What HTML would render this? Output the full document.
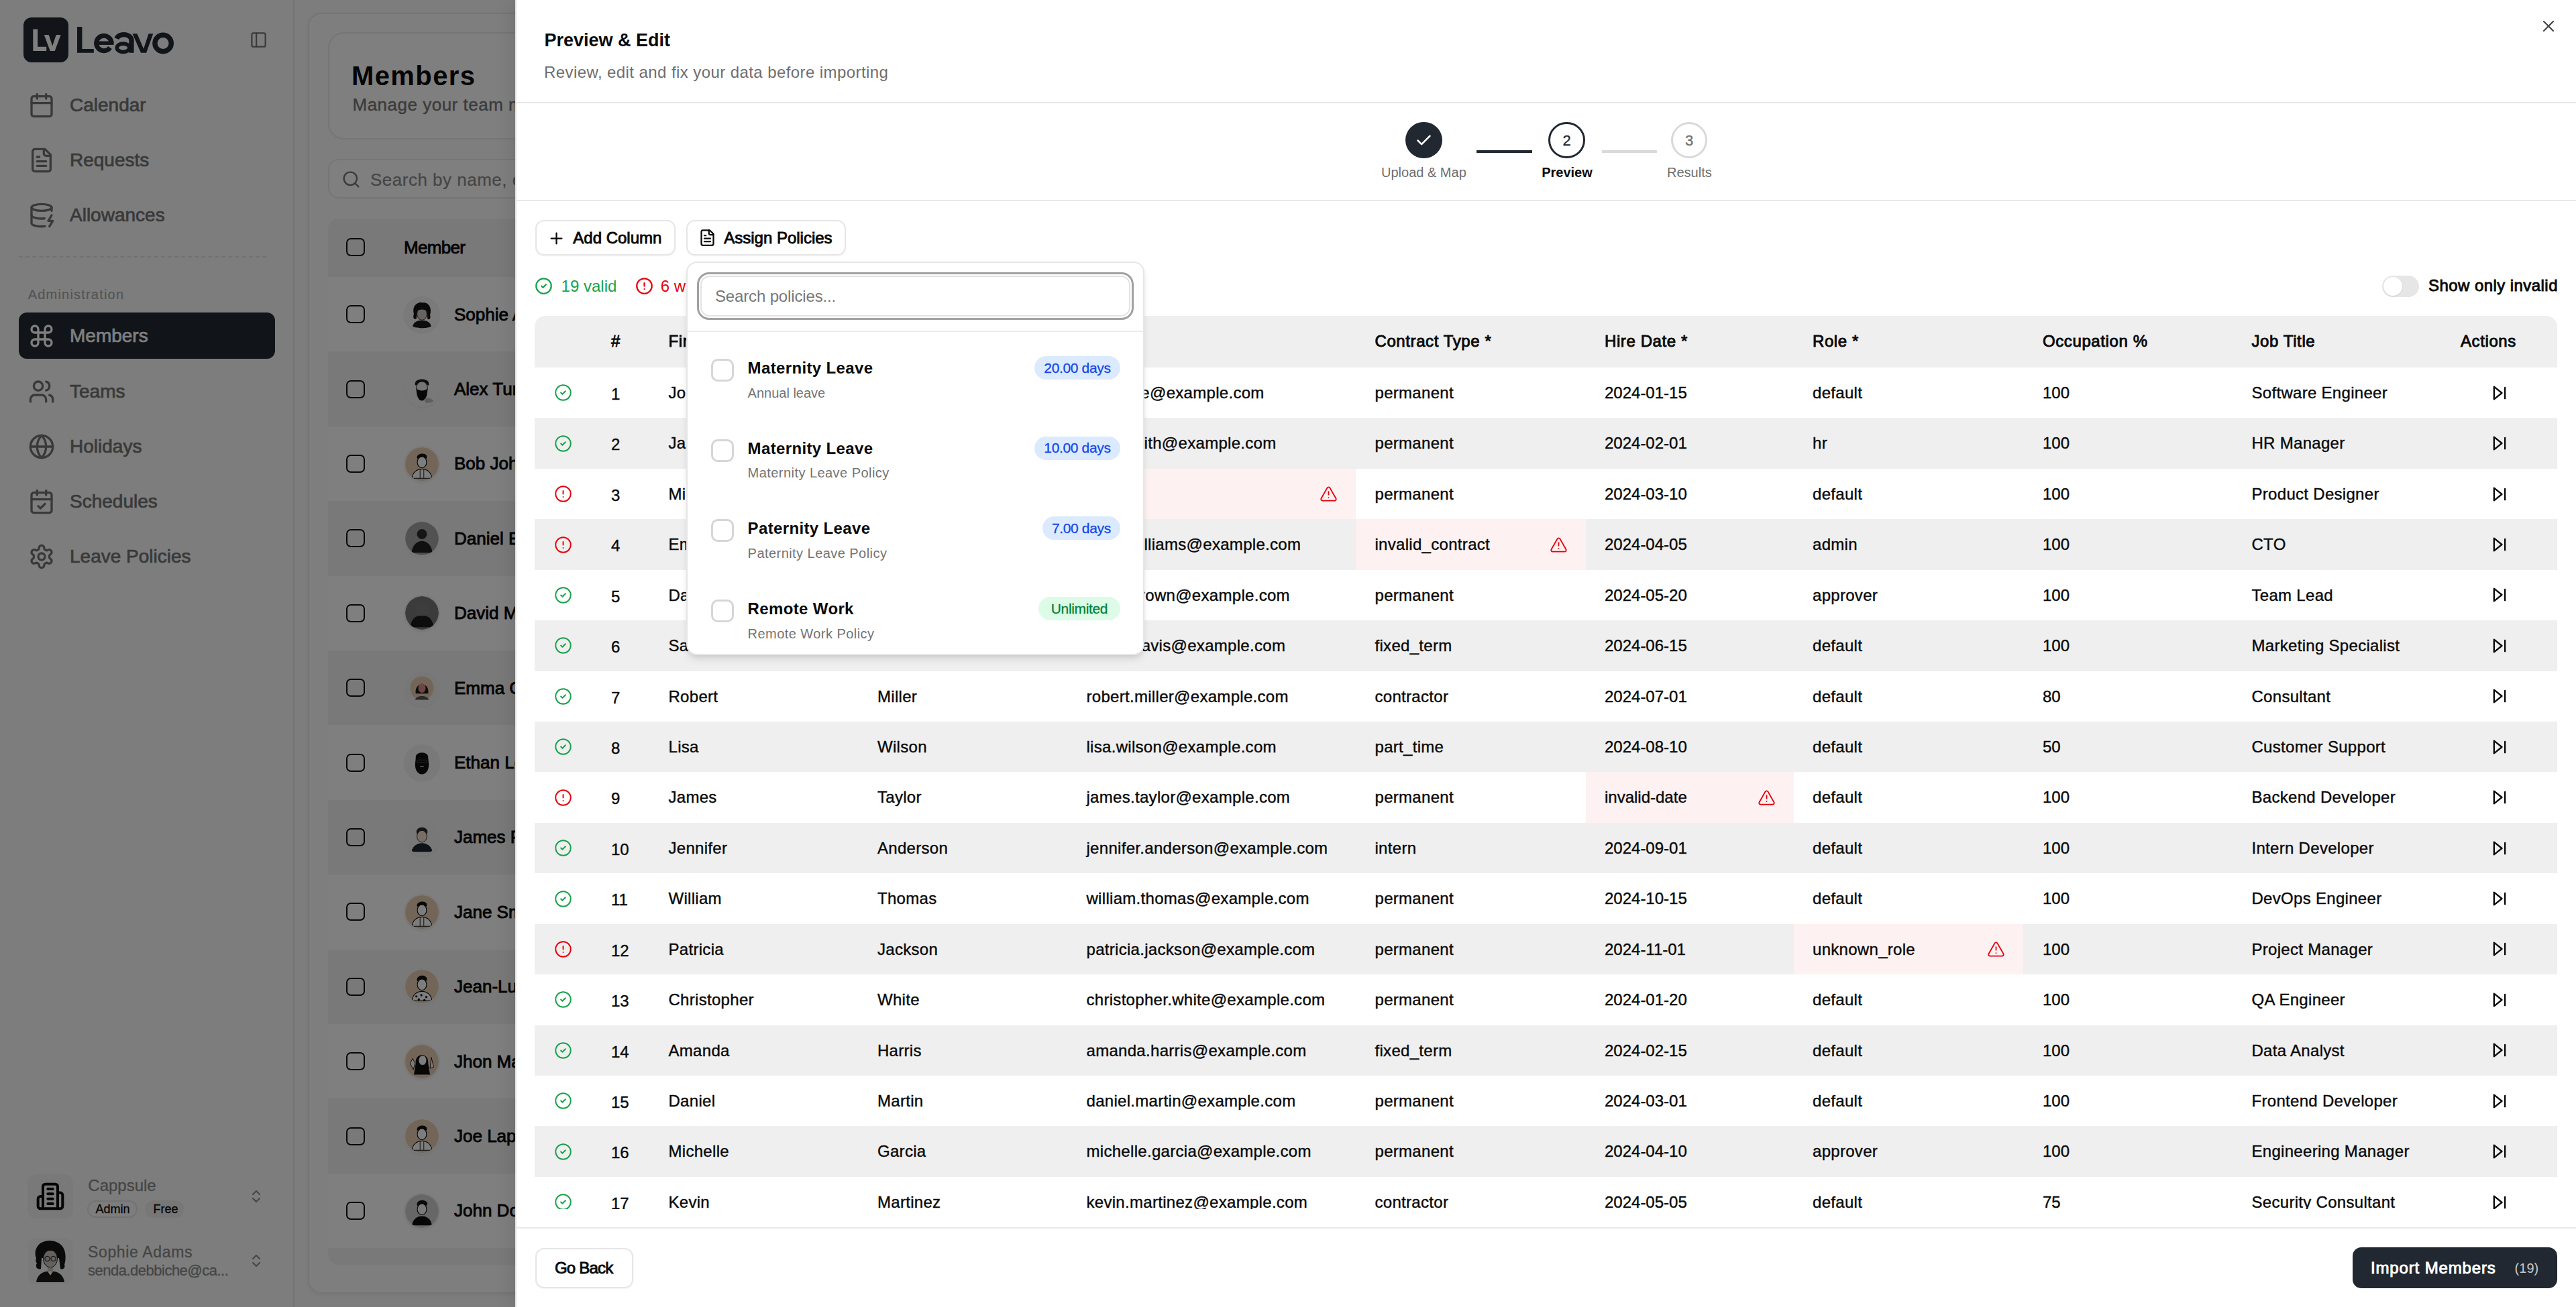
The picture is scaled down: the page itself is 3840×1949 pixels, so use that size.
<!DOCTYPE html><html><head><meta charset="utf-8"><title>Leavo - Preview &amp; Edit</title><style>
html,body{margin:0;padding:0;width:3840px;height:1949px;overflow:hidden;background:#fafafa;font-family:"Liberation Sans",sans-serif;}
*{box-sizing:border-box;}
</style></head><body>
<div style="position:absolute;left:0;top:0;width:3840px;height:1949px;overflow:hidden;background:#fafafa;">
<div style="position:absolute;left:437.00px;top:0.00px;width:2.00px;height:1949.00px;background:#e8e8e8;"></div>
<div style="position:absolute;left:35.00px;top:26.00px;width:67.00px;height:67.00px;background:#222831;border-radius:12px;"></div>
<svg style="position:absolute;left:0;top:0" width="300" height="100" viewBox="0 0 300 100">
<path d="M49.3 43.6 H56.1 V69.8 H69.2 V76 H49.3Z" fill="#ffffff"/>
<path d="M65.8 52.1 H72.7 L78.2 68.6 L83.7 52.1 H90.6 L81.7 76 H74.7Z" fill="#ffffff"/>
<path d="M115 40 H122.4 V72.9 H139.8 V78.8 H115Z" fill="#222831"/>
<path d="M166.05 64.3 A11.2 11.2 0 1 0 164.0 70.9" fill="none" stroke="#222831" stroke-width="7"/>
<rect x="143.5" y="61.5" width="26" height="5.4" fill="#222831"/>
<path d="M173.9 57.6 A11.35 8.6 0 0 1 195.95 61.5 V78.8" fill="none" stroke="#222831" stroke-width="7.3"/>
<ellipse cx="183.6" cy="71.3" rx="9.3" ry="6.2" fill="none" stroke="#222831" stroke-width="5.6"/>
<path d="M197.5 50.2 H204.4 L214.1 72.8 L221.5 50.2 H228.3 L218.1 78.8 H210Z" fill="#222831"/>
<circle cx="243.1" cy="64.5" r="12.2" fill="none" stroke="#222831" stroke-width="7.4"/>
</svg>
<svg style="position:absolute;left:372.00px;top:46.00px;" width="27" height="27" viewBox="0 0 24 24" fill="none" stroke="#777777" stroke-width="2" stroke-linecap="round" stroke-linejoin="round"><rect width="18" height="18" x="3" y="3" rx="2"/><path d="M9 3v18"/></svg>
<svg style="position:absolute;left:41.50px;top:136.50px;" width="40" height="40" viewBox="0 0 24 24" fill="none" stroke="#737373" stroke-width="2" stroke-linecap="round" stroke-linejoin="round"><path d="M8 2v4"/><path d="M16 2v4"/><rect width="18" height="18" x="3" y="4" rx="2"/><path d="M3 10h18"/></svg>
<div style="position:absolute;left:104.00px;top:142.80px;font-size:28px;line-height:28px;color:#737373;font-weight:400;white-space:nowrap;-webkit-text-stroke:0.7px #737373;">Calendar</div>
<svg style="position:absolute;left:41.50px;top:219.00px;" width="40" height="40" viewBox="0 0 24 24" fill="none" stroke="#737373" stroke-width="2" stroke-linecap="round" stroke-linejoin="round"><path d="M15 2H6a2 2 0 0 0-2 2v16a2 2 0 0 0 2 2h12a2 2 0 0 0 2-2V7Z"/><path d="M14 2v4a2 2 0 0 0 2 2h4"/><path d="M10 9H8"/><path d="M16 13H8"/><path d="M16 17H8"/></svg>
<div style="position:absolute;left:104.00px;top:225.30px;font-size:28px;line-height:28px;color:#737373;font-weight:400;white-space:nowrap;-webkit-text-stroke:0.7px #737373;">Requests</div>
<svg style="position:absolute;left:41.50px;top:301.00px;" width="40" height="40" viewBox="0 0 24 24" fill="none" stroke="#737373" stroke-width="2" stroke-linecap="round" stroke-linejoin="round"><ellipse cx="12" cy="5" rx="9" ry="3"/><path d="M3 5V19A9 3 0 0 0 15 21.84"/><path d="M21 5V8"/><path d="M21 12L18 17H22L19 22"/><path d="M3 12A9 3 0 0 0 14.59 14.87"/></svg>
<div style="position:absolute;left:104.00px;top:307.30px;font-size:28px;line-height:28px;color:#737373;font-weight:400;white-space:nowrap;-webkit-text-stroke:0.7px #737373;">Allowances</div>
<div style="position:absolute;left:28px;top:382px;width:369px;height:0;border-top:2px dashed #e3e3e3;"></div>
<div style="position:absolute;left:41.70px;top:428.67px;font-size:20px;line-height:20px;color:#a8a8a8;font-weight:400;white-space:nowrap;-webkit-text-stroke:0.2px #a8a8a8;letter-spacing:1.2px;">Administration</div>
<div style="position:absolute;left:27.50px;top:466.00px;width:382.30px;height:68.60px;background:#222831;border-radius:12px;"></div>
<svg style="position:absolute;left:41.50px;top:480.50px;" width="40" height="40" viewBox="0 0 24 24" fill="none" stroke="#ffffff" stroke-width="2" stroke-linecap="round" stroke-linejoin="round"><path d="M15 6v12a3 3 0 1 0 3-3H6a3 3 0 1 0 3 3V6a3 3 0 1 0-3 3h12a3 3 0 1 0-3-3"/></svg>
<div style="position:absolute;left:104.00px;top:487.10px;font-size:28px;line-height:28px;color:#ffffff;font-weight:400;white-space:nowrap;-webkit-text-stroke:0.7px #ffffff;">Members</div>
<svg style="position:absolute;left:41.50px;top:563.50px;" width="40" height="40" viewBox="0 0 24 24" fill="none" stroke="#737373" stroke-width="2" stroke-linecap="round" stroke-linejoin="round"><path d="M16 21v-2a4 4 0 0 0-4-4H6a4 4 0 0 0-4 4v2"/><circle cx="9" cy="7" r="4"/><path d="M22 21v-2a4 4 0 0 0-3-3.87"/><path d="M16 3.13a4 4 0 0 1 0 7.75"/></svg>
<div style="position:absolute;left:104.00px;top:569.80px;font-size:28px;line-height:28px;color:#737373;font-weight:400;white-space:nowrap;-webkit-text-stroke:0.7px #737373;">Teams</div>
<svg style="position:absolute;left:41.50px;top:646.00px;" width="40" height="40" viewBox="0 0 24 24" fill="none" stroke="#737373" stroke-width="2" stroke-linecap="round" stroke-linejoin="round"><circle cx="12" cy="12" r="10"/><path d="M12 2a14.5 14.5 0 0 0 0 20 14.5 14.5 0 0 0 0-20"/><path d="M2 12h20"/></svg>
<div style="position:absolute;left:104.00px;top:652.30px;font-size:28px;line-height:28px;color:#737373;font-weight:400;white-space:nowrap;-webkit-text-stroke:0.7px #737373;">Holidays</div>
<svg style="position:absolute;left:41.50px;top:728.00px;" width="40" height="40" viewBox="0 0 24 24" fill="none" stroke="#737373" stroke-width="2" stroke-linecap="round" stroke-linejoin="round"><path d="M8 2v4"/><path d="M16 2v4"/><rect width="18" height="18" x="3" y="4" rx="2"/><path d="M3 10h18"/><path d="m9 16 2 2 4-4"/></svg>
<div style="position:absolute;left:104.00px;top:734.30px;font-size:28px;line-height:28px;color:#737373;font-weight:400;white-space:nowrap;-webkit-text-stroke:0.7px #737373;">Schedules</div>
<svg style="position:absolute;left:41.50px;top:810.00px;" width="40" height="40" viewBox="0 0 24 24" fill="none" stroke="#737373" stroke-width="2" stroke-linecap="round" stroke-linejoin="round"><path d="M12.22 2h-.44a2 2 0 0 0-2 2v.18a2 2 0 0 1-1 1.73l-.43.25a2 2 0 0 1-2 0l-.15-.08a2 2 0 0 0-2.73.73l-.22.38a2 2 0 0 0 .73 2.73l.15.1a2 2 0 0 1 1 1.72v.51a2 2 0 0 1-1 1.74l-.15.09a2 2 0 0 0-.73 2.73l.22.38a2 2 0 0 0 2.73.73l.15-.08a2 2 0 0 1 2 0l.43.25a2 2 0 0 1 1 1.73V20a2 2 0 0 0 2 2h.44a2 2 0 0 0 2-2v-.18a2 2 0 0 1 1-1.73l.43-.25a2 2 0 0 1 2 0l.15.08a2 2 0 0 0 2.73-.73l.22-.39a2 2 0 0 0-.73-2.73l-.15-.08a2 2 0 0 1-1-1.74v-.5a2 2 0 0 1 1-1.74l.15-.09a2 2 0 0 0 .73-2.73l-.22-.38a2 2 0 0 0-2.73-.73l-.15.08a2 2 0 0 1-2 0l-.43-.25a2 2 0 0 1-1-1.73V4a2 2 0 0 0-2-2z"/><circle cx="12" cy="12" r="3"/></svg>
<div style="position:absolute;left:104.00px;top:816.30px;font-size:28px;line-height:28px;color:#737373;font-weight:400;white-space:nowrap;-webkit-text-stroke:0.7px #737373;">Leave Policies</div>
<div style="position:absolute;left:41.00px;top:1750.70px;width:68.40px;height:67.30px;background:#f2f2f2;border-radius:14px;"></div>
<svg style="position:absolute;left:53.00px;top:1762.00px;" width="44" height="44" viewBox="0 0 24 24" fill="none" stroke="#0a0a0a" stroke-width="2.2" stroke-linecap="round" stroke-linejoin="round"><path d="M6 22V4a2 2 0 0 1 2-2h8a2 2 0 0 1 2 2v18Z"/><path d="M6 12H4a2 2 0 0 0-2 2v6a2 2 0 0 0 2 2h2"/><path d="M18 9h2a2 2 0 0 1 2 2v9a2 2 0 0 1-2 2h-2"/><path d="M10 6h4"/><path d="M10 10h4"/><path d="M10 14h4"/><path d="M10 18h4"/></svg>
<div style="position:absolute;left:131.30px;top:1756.28px;font-size:24px;line-height:24px;color:#8a8a8a;font-weight:400;white-space:nowrap;-webkit-text-stroke:0.3px #8a8a8a;">Cappsule</div>
<div style="position:absolute;left:130.40px;top:1790.00px;width:74.40px;height:26.40px;border:2px solid #e6e6e6;border-radius:14px;"></div>
<div style="position:absolute;left:142.60px;top:1793.76px;font-size:18px;line-height:18px;color:#0a0a0a;font-weight:400;white-space:nowrap;-webkit-text-stroke:0.3px #0a0a0a;">Admin</div>
<div style="position:absolute;left:216.20px;top:1790.00px;width:57.80px;height:26.40px;background:#efefef;border-radius:14px;"></div>
<div style="position:absolute;left:228.50px;top:1793.76px;font-size:18px;line-height:18px;color:#0a0a0a;font-weight:400;white-space:nowrap;-webkit-text-stroke:0.3px #0a0a0a;">Free</div>
<svg style="position:absolute;left:370.00px;top:1772.00px;" width="24" height="24" viewBox="0 0 24 24" fill="none" stroke="#8a8a8a" stroke-width="2" stroke-linecap="round" stroke-linejoin="round"><path d="m7 15 5 5 5-5"/><path d="m7 9 5-5 5 5"/></svg>
<div style="position:absolute;left:41.00px;top:1846.00px;width:68.40px;height:68.50px;background:#f4f4f4;border-radius:14px;"></div>
<svg style="position:absolute;left:41px;top:1846px" width="68" height="68" viewBox="0 0 68 68">
<path d="M13 30 C9 20 14 8 26 5 C36 2 48 6 53 14 C58 22 57 34 55 40 C57 44 53 48 49 46 L47 30 L21 30 L20 46 C14 48 11 42 14 38 C12 35 12 33 13 30Z" fill="#151515"/>
<ellipse cx="34" cy="31" rx="10.5" ry="13" fill="#c9c3bd" stroke="#1a1a1a" stroke-width="1"/>
<path d="M22 24 C24 12 44 12 46 24 C42 17 28 17 22 24Z" fill="#151515"/>
<circle cx="29.5" cy="31" r="3.6" fill="none" stroke="#333" stroke-width="1.2"/><circle cx="38.5" cy="31" r="3.6" fill="none" stroke="#333" stroke-width="1.2"/>
<path d="M30 44 L30 50 L38 50 L38 44Z" fill="#c9c3bd"/>
<path d="M13 66 C14 56 22 50 30 50 L34 56 L38 50 C46 50 54 56 55 66Z" fill="#1b1b1b"/>
</svg>
<div style="position:absolute;left:131.00px;top:1856.13px;font-size:23px;line-height:23px;color:#8a8a8a;font-weight:400;white-space:nowrap;-webkit-text-stroke:0.3px #8a8a8a;letter-spacing:0.65px;">Sophie Adams</div>
<div style="position:absolute;left:131.00px;top:1883.58px;font-size:22px;line-height:22px;color:#8a8a8a;font-weight:400;white-space:nowrap;-webkit-text-stroke:0.3px #8a8a8a;letter-spacing:-0.5px;">senda.debbiche@ca...</div>
<svg style="position:absolute;left:370.00px;top:1868.00px;" width="24" height="24" viewBox="0 0 24 24" fill="none" stroke="#8a8a8a" stroke-width="2" stroke-linecap="round" stroke-linejoin="round"><path d="m7 15 5 5 5-5"/><path d="m7 9 5-5 5 5"/></svg>
<div style="position:absolute;left:458.50px;top:19.00px;width:541.50px;height:1910.00px;background:#fcfcfc;border:2px solid #ebebeb;border-radius:20px;box-shadow:0 2px 6px rgba(0,0,0,.05);"></div>
<div style="position:absolute;left:489.00px;top:48.00px;width:511.00px;height:160.00px;background:#ffffff;border:2px solid #ebebeb;border-radius:24px;"></div>
<div style="position:absolute;left:524.00px;top:93.14px;font-size:40px;line-height:40px;color:#0a0a0a;font-weight:700;white-space:nowrap;letter-spacing:1.4px;">Members</div>
<div style="position:absolute;left:525.50px;top:142.99px;font-size:26px;line-height:26px;color:#777777;font-weight:400;white-space:nowrap;-webkit-text-stroke:0.4px #777777;letter-spacing:0.5px;">Manage your team members and their roles</div>
<div style="position:absolute;left:489.00px;top:237.00px;width:511.00px;height:59.00px;background:#ffffff;border:2px solid #ebebeb;border-radius:16px;"></div>
<svg style="position:absolute;left:509.00px;top:253.00px;" width="29" height="29" viewBox="0 0 24 24" fill="none" stroke="#777777" stroke-width="2" stroke-linecap="round" stroke-linejoin="round"><circle cx="11" cy="11" r="8"/><path d="m21 21-4.3-4.3"/></svg>
<div style="position:absolute;left:552.00px;top:254.99px;font-size:26px;line-height:26px;color:#8a8a8a;font-weight:400;white-space:nowrap;-webkit-text-stroke:0.2px #8a8a8a;letter-spacing:0.5px;">Search by name, email...</div>
<div style="position:absolute;left:489.00px;top:326.00px;width:511.00px;height:87.00px;background:#f3f3f3;border-top-left-radius:16px;"></div>
<div style="position:absolute;left:516.00px;top:355.00px;width:28.00px;height:27.00px;border:2.5px solid #111;border-radius:7px;"></div>
<div style="position:absolute;left:602.00px;top:355.99px;font-size:26px;line-height:26px;color:#0a0a0a;font-weight:400;white-space:nowrap;-webkit-text-stroke:0.9px #0a0a0a;letter-spacing:-0.7px;">Member</div>
<div style="position:absolute;left:489.00px;top:413.00px;width:511.00px;height:111.40px;background:#ffffff;"></div>
<div style="position:absolute;left:516.00px;top:455.20px;width:28.00px;height:27.00px;border:2.5px solid #111;border-radius:7px;"></div>
<svg style="position:absolute;left:604.30px;top:443.70px;border-radius:50%;box-shadow:0 0 0 2px #f2f2f2, 0 2px 4px rgba(0,0,0,.12);" width="50" height="50" viewBox="0 0 54 54"><defs><clipPath id="c468"><circle cx="27" cy="27" r="27"/></clipPath></defs><g clip-path="url(#c468)"><rect width="54" height="54" fill="#f4f4f4"/><path d="M14 26 C10 10 24 6 27 8 C36 6 44 14 40 28 C42 34 38 36 36 34 L35 24 L19 24 L18 34 C14 36 12 32 14 26Z" fill="#151515"/><ellipse cx="27" cy="26" rx="8" ry="10" fill="#cfc7c0" stroke="#222" stroke-width="1"/><path d="M19 22 C21 14 33 14 35 22 C32 18 22 18 19 22Z" fill="#151515"/><path d="M12 46 C14 38 22 36 27 37 C32 36 40 38 42 46 C36 50 18 50 12 46Z" fill="#1b1b1b"/></g></svg>
<div style="position:absolute;left:677.00px;top:455.69px;font-size:26px;line-height:26px;color:#0a0a0a;font-weight:400;white-space:nowrap;-webkit-text-stroke:0.9px #0a0a0a;">Sophie Adams</div>
<div style="position:absolute;left:489.00px;top:524.40px;width:511.00px;height:111.40px;background:#f3f3f3;"></div>
<div style="position:absolute;left:516.00px;top:566.60px;width:28.00px;height:27.00px;border:2.5px solid #111;border-radius:7px;"></div>
<svg style="position:absolute;left:604.30px;top:555.10px;border-radius:50%;box-shadow:0 0 0 2px #f2f2f2, 0 2px 4px rgba(0,0,0,.12);" width="50" height="50" viewBox="0 0 54 54"><defs><clipPath id="c580"><circle cx="27" cy="27" r="27"/></clipPath></defs><g clip-path="url(#c580)"><rect width="54" height="54" fill="#f2f2f2"/><path d="M16 18 C16 9 38 9 38 18 L38 21 L16 21Z" fill="#1a1a1a"/><ellipse cx="27" cy="25" rx="9" ry="10" fill="#e8e8e8" stroke="#222" stroke-width="1"/><path d="M18 26 C18 40 22 46 27 46 C32 46 36 40 36 26 C33 31 21 31 18 26Z" fill="#111"/><path d="M30 44 C36 40 44 42 46 48 L34 50Z" fill="#bdbdbd"/></g></svg>
<div style="position:absolute;left:677.00px;top:567.09px;font-size:26px;line-height:26px;color:#0a0a0a;font-weight:400;white-space:nowrap;-webkit-text-stroke:0.9px #0a0a0a;">Alex Turner</div>
<div style="position:absolute;left:489.00px;top:635.80px;width:511.00px;height:111.40px;background:#ffffff;"></div>
<div style="position:absolute;left:516.00px;top:678.00px;width:28.00px;height:27.00px;border:2.5px solid #111;border-radius:7px;"></div>
<svg style="position:absolute;left:604.30px;top:666.50px;border-radius:50%;box-shadow:0 0 0 2px #f2f2f2, 0 2px 4px rgba(0,0,0,.12);" width="50" height="50" viewBox="0 0 54 54"><defs><clipPath id="c691"><circle cx="27" cy="27" r="27"/></clipPath></defs><g clip-path="url(#c691)"><rect width="54" height="54" fill="#e6cdb0"/><path d="M19 17 C18 9 34 8 35 15 L34 19 L20 19Z" fill="#111"/><ellipse cx="27" cy="24" rx="7.5" ry="9" fill="#fafafa" stroke="#111" stroke-width="1.2"/><path d="M11 50 C12 40 19 35 27 35 C35 35 42 40 43 50Z" fill="#fafafa" stroke="#111" stroke-width="1.2"/><path d="M24 36 L24 50 M30 36 L30 50" stroke="#111" stroke-width="1"/></g></svg>
<div style="position:absolute;left:677.00px;top:678.49px;font-size:26px;line-height:26px;color:#0a0a0a;font-weight:400;white-space:nowrap;-webkit-text-stroke:0.9px #0a0a0a;">Bob Johnson</div>
<div style="position:absolute;left:489.00px;top:747.20px;width:511.00px;height:111.40px;background:#f3f3f3;"></div>
<div style="position:absolute;left:516.00px;top:789.40px;width:28.00px;height:27.00px;border:2.5px solid #111;border-radius:7px;"></div>
<svg style="position:absolute;left:604.30px;top:777.90px;border-radius:50%;box-shadow:0 0 0 2px #f2f2f2, 0 2px 4px rgba(0,0,0,.12);" width="50" height="50" viewBox="0 0 54 54"><defs><clipPath id="c802"><circle cx="27" cy="27" r="27"/></clipPath></defs><g clip-path="url(#c802)"><rect width="54" height="54" fill="#a5a5a5"/><circle cx="27" cy="20" r="8" fill="#2a2a2a"/><path d="M10 50 C12 36 20 31 27 31 C34 31 42 36 44 50Z" fill="#202020"/></g></svg>
<div style="position:absolute;left:677.00px;top:789.89px;font-size:26px;line-height:26px;color:#0a0a0a;font-weight:400;white-space:nowrap;-webkit-text-stroke:0.9px #0a0a0a;">Daniel Evans</div>
<div style="position:absolute;left:489.00px;top:858.60px;width:511.00px;height:111.40px;background:#ffffff;"></div>
<div style="position:absolute;left:516.00px;top:900.80px;width:28.00px;height:27.00px;border:2.5px solid #111;border-radius:7px;"></div>
<svg style="position:absolute;left:604.30px;top:889.30px;border-radius:50%;box-shadow:0 0 0 2px #f2f2f2, 0 2px 4px rgba(0,0,0,.12);" width="50" height="50" viewBox="0 0 54 54"><defs><clipPath id="c914"><circle cx="27" cy="27" r="27"/></clipPath></defs><g clip-path="url(#c914)"><rect width="54" height="54" fill="#777777"/><circle cx="27" cy="22" r="11" fill="#7a7a7a"/><path d="M8 50 C10 34 20 30 27 32 C34 30 44 34 46 50Z" fill="#1a1a1a"/></g></svg>
<div style="position:absolute;left:677.00px;top:901.29px;font-size:26px;line-height:26px;color:#0a0a0a;font-weight:400;white-space:nowrap;-webkit-text-stroke:0.9px #0a0a0a;">David Miller</div>
<div style="position:absolute;left:489.00px;top:970.00px;width:511.00px;height:111.40px;background:#f3f3f3;"></div>
<div style="position:absolute;left:516.00px;top:1012.20px;width:28.00px;height:27.00px;border:2.5px solid #111;border-radius:7px;"></div>
<svg style="position:absolute;left:604.30px;top:1000.70px;border-radius:50%;box-shadow:0 0 0 2px #f2f2f2, 0 2px 4px rgba(0,0,0,.12);" width="50" height="50" viewBox="0 0 54 54"><defs><clipPath id="c1025"><circle cx="27" cy="27" r="27"/></clipPath></defs><g clip-path="url(#c1025)"><rect width="54" height="54" fill="#efefef"/><circle cx="27" cy="27" r="19" fill="#e6cdb0"/><path d="M17 36 C14 16 40 16 37 36Z" fill="#1a1a1a"/><ellipse cx="27" cy="27" rx="6" ry="7.5" fill="#d88a8a"/><path d="M16 46 C18 38 36 38 38 46Z" fill="#555"/></g></svg>
<div style="position:absolute;left:677.00px;top:1012.69px;font-size:26px;line-height:26px;color:#0a0a0a;font-weight:400;white-space:nowrap;-webkit-text-stroke:0.9px #0a0a0a;">Emma Clark</div>
<div style="position:absolute;left:489.00px;top:1081.40px;width:511.00px;height:111.40px;background:#ffffff;"></div>
<div style="position:absolute;left:516.00px;top:1123.60px;width:28.00px;height:27.00px;border:2.5px solid #111;border-radius:7px;"></div>
<svg style="position:absolute;left:604.30px;top:1112.10px;border-radius:50%;box-shadow:0 0 0 2px #f2f2f2, 0 2px 4px rgba(0,0,0,.12);" width="50" height="50" viewBox="0 0 54 54"><defs><clipPath id="c1137"><circle cx="27" cy="27" r="27"/></clipPath></defs><g clip-path="url(#c1137)"><rect width="54" height="54" fill="#f2f2f2"/><path d="M17 20 C15 8 39 8 37 20 L38 30 C38 42 32 46 27 46 C22 46 16 42 16 30Z" fill="#0f0f0f"/><rect x="19" y="23" width="16" height="4" rx="2" fill="#0f0f0f" stroke="#777" stroke-width=".6"/><path d="M24 33 Q27 35 30 33" stroke="#ddd" stroke-width="1.2" fill="none"/></g></svg>
<div style="position:absolute;left:677.00px;top:1124.09px;font-size:26px;line-height:26px;color:#0a0a0a;font-weight:400;white-space:nowrap;-webkit-text-stroke:0.9px #0a0a0a;">Ethan Lewis</div>
<div style="position:absolute;left:489.00px;top:1192.80px;width:511.00px;height:111.40px;background:#f3f3f3;"></div>
<div style="position:absolute;left:516.00px;top:1235.00px;width:28.00px;height:27.00px;border:2.5px solid #111;border-radius:7px;"></div>
<svg style="position:absolute;left:604.30px;top:1223.50px;border-radius:50%;box-shadow:0 0 0 2px #f2f2f2, 0 2px 4px rgba(0,0,0,.12);" width="50" height="50" viewBox="0 0 54 54"><defs><clipPath id="c1248"><circle cx="27" cy="27" r="27"/></clipPath></defs><g clip-path="url(#c1248)"><rect width="54" height="54" fill="#f0f0f0"/><path d="M18 18 C18 8 36 8 36 18 L35 21 L19 21Z" fill="#2a2a2a"/><ellipse cx="27" cy="25" rx="8" ry="9.5" fill="#f4dcc8" stroke="#222" stroke-width="1"/><path d="M10 50 C12 40 20 36 27 36 C34 36 42 40 44 50Z" fill="#1e2430"/></g></svg>
<div style="position:absolute;left:677.00px;top:1235.49px;font-size:26px;line-height:26px;color:#0a0a0a;font-weight:400;white-space:nowrap;-webkit-text-stroke:0.9px #0a0a0a;">James Parker</div>
<div style="position:absolute;left:489.00px;top:1304.20px;width:511.00px;height:111.40px;background:#ffffff;"></div>
<div style="position:absolute;left:516.00px;top:1346.40px;width:28.00px;height:27.00px;border:2.5px solid #111;border-radius:7px;"></div>
<svg style="position:absolute;left:604.30px;top:1334.90px;border-radius:50%;box-shadow:0 0 0 2px #f2f2f2, 0 2px 4px rgba(0,0,0,.12);" width="50" height="50" viewBox="0 0 54 54"><defs><clipPath id="c1359"><circle cx="27" cy="27" r="27"/></clipPath></defs><g clip-path="url(#c1359)"><rect width="54" height="54" fill="#e6cdb0"/><path d="M19 17 C18 9 34 8 35 15 L34 19 L20 19Z" fill="#111"/><ellipse cx="27" cy="24" rx="7.5" ry="9" fill="#fafafa" stroke="#111" stroke-width="1.2"/><path d="M11 50 C12 40 19 35 27 35 C35 35 42 40 43 50Z" fill="#fafafa" stroke="#111" stroke-width="1.2"/><path d="M24 36 L24 50 M30 36 L30 50" stroke="#111" stroke-width="1"/></g></svg>
<div style="position:absolute;left:677.00px;top:1346.89px;font-size:26px;line-height:26px;color:#0a0a0a;font-weight:400;white-space:nowrap;-webkit-text-stroke:0.9px #0a0a0a;">Jane Smith</div>
<div style="position:absolute;left:489.00px;top:1415.60px;width:511.00px;height:111.40px;background:#f3f3f3;"></div>
<div style="position:absolute;left:516.00px;top:1457.80px;width:28.00px;height:27.00px;border:2.5px solid #111;border-radius:7px;"></div>
<svg style="position:absolute;left:604.30px;top:1446.30px;border-radius:50%;box-shadow:0 0 0 2px #f2f2f2, 0 2px 4px rgba(0,0,0,.12);" width="50" height="50" viewBox="0 0 54 54"><defs><clipPath id="c1471"><circle cx="27" cy="27" r="27"/></clipPath></defs><g clip-path="url(#c1471)"><rect width="54" height="54" fill="#e6cdb0"/><path d="M19 17 C18 8 34 7 35 15 L34 19 L20 19Z" fill="#111"/><ellipse cx="27" cy="24" rx="7.5" ry="9" fill="#fafafa" stroke="#111" stroke-width="1.2"/><path d="M11 50 C12 40 19 35 27 35 C35 35 42 40 43 50Z" fill="#fafafa" stroke="#111" stroke-width="1.2"/><circle cx="18" cy="43" r="1.8" fill="#111"/><circle cx="26" cy="41" r="1.8" fill="#111"/><circle cx="34" cy="44" r="1.8" fill="#111"/><circle cx="22" cy="48" r="1.8" fill="#111"/><circle cx="31" cy="49" r="1.8" fill="#111"/></g></svg>
<div style="position:absolute;left:677.00px;top:1458.29px;font-size:26px;line-height:26px;color:#0a0a0a;font-weight:400;white-space:nowrap;-webkit-text-stroke:0.9px #0a0a0a;">Jean-Luc Picard</div>
<div style="position:absolute;left:489.00px;top:1527.00px;width:511.00px;height:111.40px;background:#ffffff;"></div>
<div style="position:absolute;left:516.00px;top:1569.20px;width:28.00px;height:27.00px;border:2.5px solid #111;border-radius:7px;"></div>
<svg style="position:absolute;left:604.30px;top:1557.70px;border-radius:50%;box-shadow:0 0 0 2px #f2f2f2, 0 2px 4px rgba(0,0,0,.12);" width="50" height="50" viewBox="0 0 54 54"><defs><clipPath id="c1582"><circle cx="27" cy="27" r="27"/></clipPath></defs><g clip-path="url(#c1582)"><rect width="54" height="54" fill="#e6cdb0"/><path d="M17 30 C15 12 39 12 37 30 L40 48 L14 48Z" fill="#111"/><ellipse cx="28" cy="25" rx="6.5" ry="8" fill="#fafafa" stroke="#111" stroke-width="1"/><path d="M8 30 L12 22 L16 30 L13 40Z M40 38 L42 20 L46 36Z" fill="#fafafa" stroke="#111" stroke-width="1"/></g></svg>
<div style="position:absolute;left:677.00px;top:1569.69px;font-size:26px;line-height:26px;color:#0a0a0a;font-weight:400;white-space:nowrap;-webkit-text-stroke:0.9px #0a0a0a;">Jhon Marston</div>
<div style="position:absolute;left:489.00px;top:1638.40px;width:511.00px;height:111.40px;background:#f3f3f3;"></div>
<div style="position:absolute;left:516.00px;top:1680.60px;width:28.00px;height:27.00px;border:2.5px solid #111;border-radius:7px;"></div>
<svg style="position:absolute;left:604.30px;top:1669.10px;border-radius:50%;box-shadow:0 0 0 2px #f2f2f2, 0 2px 4px rgba(0,0,0,.12);" width="50" height="50" viewBox="0 0 54 54"><defs><clipPath id="c1694"><circle cx="27" cy="27" r="27"/></clipPath></defs><g clip-path="url(#c1694)"><rect width="54" height="54" fill="#e6cdb0"/><path d="M19 17 C18 9 34 8 35 15 L34 19 L20 19Z" fill="#111"/><ellipse cx="27" cy="24" rx="7.5" ry="9" fill="#fafafa" stroke="#111" stroke-width="1.2"/><path d="M11 50 C12 40 19 35 27 35 C35 35 42 40 43 50Z" fill="#fafafa" stroke="#111" stroke-width="1.2"/><path d="M24 36 L24 50 M30 36 L30 50" stroke="#111" stroke-width="1"/></g></svg>
<div style="position:absolute;left:677.00px;top:1681.09px;font-size:26px;line-height:26px;color:#0a0a0a;font-weight:400;white-space:nowrap;-webkit-text-stroke:0.9px #0a0a0a;">Joe Lapin</div>
<div style="position:absolute;left:489.00px;top:1749.80px;width:511.00px;height:111.40px;background:#ffffff;"></div>
<div style="position:absolute;left:516.00px;top:1792.00px;width:28.00px;height:27.00px;border:2.5px solid #111;border-radius:7px;"></div>
<svg style="position:absolute;left:604.30px;top:1780.50px;border-radius:50%;box-shadow:0 0 0 2px #f2f2f2, 0 2px 4px rgba(0,0,0,.12);" width="50" height="50" viewBox="0 0 54 54"><defs><clipPath id="c1805"><circle cx="27" cy="27" r="27"/></clipPath></defs><g clip-path="url(#c1805)"><rect width="54" height="54" fill="#cfcfcf"/><path d="M19 17 C18 8 34 7 36 15 L34 19 L20 19Z" fill="#111"/><ellipse cx="27" cy="24" rx="7.5" ry="9" fill="#f2f2f2" stroke="#111" stroke-width="1.2"/><path d="M11 50 C12 40 19 35 27 35 C35 35 42 40 43 50Z" fill="#0d0d0d"/></g></svg>
<div style="position:absolute;left:677.00px;top:1792.49px;font-size:26px;line-height:26px;color:#0a0a0a;font-weight:400;white-space:nowrap;-webkit-text-stroke:0.9px #0a0a0a;">John Doe</div>
<div style="position:absolute;left:489.00px;top:1861.20px;width:511.00px;height:24.80px;background:#f3f3f3;border-bottom-left-radius:16px;"></div>
</div>
<div style="position:absolute;left:0.00px;top:0.00px;width:3840.00px;height:1949.00px;background:rgba(0,0,0,0.5);"></div>
<div style="position:absolute;left:768px;top:0;width:3072px;height:1949px;background:#ffffff;border-left:2px solid #e6e6e6;box-shadow:-8px 0 24px rgba(0,0,0,.08);overflow:hidden;">
</div>
<div style="position:absolute;left:811.50px;top:47.14px;font-size:27px;line-height:27px;color:#0a0a0a;font-weight:700;white-space:nowrap;">Preview &amp; Edit</div>
<div style="position:absolute;left:811.00px;top:95.98px;font-size:24px;line-height:24px;color:#6e6e6e;font-weight:400;white-space:nowrap;letter-spacing:0.42px;">Review, edit and fix your data before importing</div>
<svg style="position:absolute;left:3785.00px;top:25.20px;" width="28" height="28" viewBox="0 0 24 24" fill="none" stroke="#4a4a4a" stroke-width="2" stroke-linecap="round" stroke-linejoin="round"><path d="M18 6 6 18"/><path d="m6 6 12 12"/></svg>
<div style="position:absolute;left:768.00px;top:152.00px;width:3072.00px;height:2.00px;background:#e8e8e8;"></div>
<div style="position:absolute;left:2094.90px;top:181.60px;width:54.70px;height:54.70px;background:#222831;border-radius:50%;"></div>
<svg style="position:absolute;left:2109.00px;top:195.50px;" width="27" height="27" viewBox="0 0 24 24" fill="none" stroke="#ffffff" stroke-width="2.2" stroke-linecap="round" stroke-linejoin="round"><path d="M20 6 9 17l-5-5"/></svg>
<div style="position:absolute;left:2201.00px;top:224.20px;width:82.60px;height:3.70px;background:#222831;"></div>
<div style="position:absolute;left:2308.30px;top:181.60px;width:54.70px;height:54.70px;border:3.5px solid #222831;border-radius:50%;"></div>
<div style="position:absolute;left:2335.60px;transform:translateX(-50%);top:198.58px;font-size:22px;line-height:22px;color:#222831;font-weight:400;white-space:nowrap;-webkit-text-stroke:0.3px #222831;">2</div>
<div style="position:absolute;left:2388.00px;top:224.20px;width:82.30px;height:3.70px;background:#d9d9d9;"></div>
<div style="position:absolute;left:2490.60px;top:181.60px;width:54.70px;height:54.70px;border:3.5px solid #d9d9d9;border-radius:50%;"></div>
<div style="position:absolute;left:2518.00px;transform:translateX(-50%);top:198.58px;font-size:22px;line-height:22px;color:#6e6e6e;font-weight:400;white-space:nowrap;-webkit-text-stroke:0.3px #6e6e6e;">3</div>
<div style="position:absolute;left:2122.40px;transform:translateX(-50%);top:246.57px;font-size:20px;line-height:20px;color:#6e6e6e;font-weight:400;white-space:nowrap;">Upload &amp; Map</div>
<div style="position:absolute;left:2336.00px;transform:translateX(-50%);top:246.57px;font-size:20px;line-height:20px;color:#0a0a0a;font-weight:700;white-space:nowrap;">Preview</div>
<div style="position:absolute;left:2518.40px;transform:translateX(-50%);top:246.57px;font-size:20px;line-height:20px;color:#6e6e6e;font-weight:400;white-space:nowrap;">Results</div>
<div style="position:absolute;left:768.00px;top:298.00px;width:3072.00px;height:2.00px;background:#e8e8e8;"></div>
<div style="position:absolute;left:797.80px;top:327.80px;width:209.20px;height:53.30px;border:2px solid #e6e6e6;border-radius:13px;box-shadow:0 1px 2px rgba(0,0,0,.05);background:#fff;"></div>
<svg style="position:absolute;left:816.20px;top:341.50px;" width="27" height="27" viewBox="0 0 24 24" fill="none" stroke="#0a0a0a" stroke-width="2" stroke-linecap="round" stroke-linejoin="round"><path d="M5 12h14"/><path d="M12 5v14"/></svg>
<div style="position:absolute;left:854.30px;top:343.08px;font-size:24px;line-height:24px;color:#0a0a0a;font-weight:400;white-space:nowrap;-webkit-text-stroke:0.9px #0a0a0a;">Add Column</div>
<div style="position:absolute;left:1022.50px;top:327.80px;width:238.00px;height:53.30px;border:2px solid #e6e6e6;border-radius:13px;box-shadow:0 1px 2px rgba(0,0,0,.05);background:#fff;"></div>
<svg style="position:absolute;left:1040.60px;top:341.00px;" width="27" height="27" viewBox="0 0 24 24" fill="none" stroke="#0a0a0a" stroke-width="2" stroke-linecap="round" stroke-linejoin="round"><path d="M15 2H6a2 2 0 0 0-2 2v16a2 2 0 0 0 2 2h12a2 2 0 0 0 2-2V7Z"/><path d="M14 2v4a2 2 0 0 0 2 2h4"/><path d="M10 9H8"/><path d="M16 13H8"/><path d="M16 17H8"/></svg>
<div style="position:absolute;left:1079.20px;top:343.08px;font-size:24px;line-height:24px;color:#0a0a0a;font-weight:400;white-space:nowrap;-webkit-text-stroke:0.9px #0a0a0a;">Assign Policies</div>
<svg style="position:absolute;left:797.30px;top:413.20px;" width="27" height="27" viewBox="0 0 24 24" fill="none" stroke="#16a34a" stroke-width="2" stroke-linecap="round" stroke-linejoin="round"><circle cx="12" cy="12" r="10"/><path d="m9 12 2 2 4-4"/></svg>
<div style="position:absolute;left:836.60px;top:415.18px;font-size:24px;line-height:24px;color:#16a34a;font-weight:400;white-space:nowrap;">19 valid</div>
<svg style="position:absolute;left:946.50px;top:413.20px;" width="27" height="27" viewBox="0 0 24 24" fill="none" stroke="#e7000b" stroke-width="2" stroke-linecap="round" stroke-linejoin="round"><circle cx="12" cy="12" r="10"/><line x1="12" x2="12" y1="8" y2="12"/><line x1="12" x2="12.01" y1="16" y2="16"/></svg>
<div style="position:absolute;left:984.70px;top:415.18px;font-size:24px;line-height:24px;color:#e7000b;font-weight:400;white-space:nowrap;">6 with errors</div>
<div style="position:absolute;left:3551.40px;top:411.30px;width:54.40px;height:31.30px;background:#e6e6e6;border-radius:16px;"></div>
<div style="position:absolute;left:3552.50px;top:412.70px;width:28.00px;height:28.00px;background:#ffffff;border-radius:50%;box-shadow:0 1px 2px rgba(0,0,0,.12);"></div>
<div style="position:absolute;left:3620.00px;top:414.48px;font-size:24px;line-height:24px;color:#0a0a0a;font-weight:400;white-space:nowrap;-webkit-text-stroke:0.9px #0a0a0a;letter-spacing:0.44px;">Show only invalid</div>
<div style="position:absolute;left:797.3px;top:471px;width:3015.1px;height:1331.5px;overflow:hidden;border-top-left-radius:16px;border-top-right-radius:16px;">
<div style="position:absolute;left:0.00px;top:0.00px;width:3015.10px;height:77.00px;background:#efefef;"></div>
<div style="position:absolute;left:113.70px;top:26.38px;font-size:24px;line-height:24px;color:#0a0a0a;font-weight:400;white-space:nowrap;-webkit-text-stroke:0.9px #0a0a0a;letter-spacing:0.6px;">#</div>
<div style="position:absolute;left:199.20px;top:26.38px;font-size:24px;line-height:24px;color:#0a0a0a;font-weight:400;white-space:nowrap;-webkit-text-stroke:0.9px #0a0a0a;letter-spacing:0.6px;">First Name *</div>
<div style="position:absolute;left:510.70px;top:26.38px;font-size:24px;line-height:24px;color:#0a0a0a;font-weight:400;white-space:nowrap;-webkit-text-stroke:0.9px #0a0a0a;letter-spacing:0.6px;">Last Name *</div>
<div style="position:absolute;left:822.20px;top:26.38px;font-size:24px;line-height:24px;color:#0a0a0a;font-weight:400;white-space:nowrap;-webkit-text-stroke:0.9px #0a0a0a;letter-spacing:0.6px;">Email *</div>
<div style="position:absolute;left:1252.20px;top:26.38px;font-size:24px;line-height:24px;color:#0a0a0a;font-weight:400;white-space:nowrap;-webkit-text-stroke:0.9px #0a0a0a;letter-spacing:0.6px;">Contract Type *</div>
<div style="position:absolute;left:1594.70px;top:26.38px;font-size:24px;line-height:24px;color:#0a0a0a;font-weight:400;white-space:nowrap;-webkit-text-stroke:0.9px #0a0a0a;letter-spacing:0.6px;">Hire Date *</div>
<div style="position:absolute;left:1904.70px;top:26.38px;font-size:24px;line-height:24px;color:#0a0a0a;font-weight:400;white-space:nowrap;-webkit-text-stroke:0.9px #0a0a0a;letter-spacing:0.6px;">Role *</div>
<div style="position:absolute;left:2247.70px;top:26.38px;font-size:24px;line-height:24px;color:#0a0a0a;font-weight:400;white-space:nowrap;-webkit-text-stroke:0.9px #0a0a0a;letter-spacing:0.6px;">Occupation %</div>
<div style="position:absolute;left:2559.20px;top:26.38px;font-size:24px;line-height:24px;color:#0a0a0a;font-weight:400;white-space:nowrap;-webkit-text-stroke:0.9px #0a0a0a;letter-spacing:0.6px;">Job Title</div>
<div style="position:absolute;left:2870.70px;top:26.38px;font-size:24px;line-height:24px;color:#0a0a0a;font-weight:400;white-space:nowrap;-webkit-text-stroke:0.9px #0a0a0a;letter-spacing:0.6px;">Actions</div>
<div style="position:absolute;left:0.00px;top:77.00px;width:3015.10px;height:75.43px;background:#ffffff;"></div>
<svg style="position:absolute;left:29.20px;top:101.22px;" width="27" height="27" viewBox="0 0 24 24" fill="none" stroke="#16a34a" stroke-width="1.7" stroke-linecap="round" stroke-linejoin="round"><circle cx="12" cy="12" r="10"/><path d="m9 12 2 2 4-4"/></svg>
<div style="position:absolute;left:113.70px;top:105.00px;font-size:24px;line-height:24px;color:#0a0a0a;font-weight:400;white-space:nowrap;-webkit-text-stroke:0.4px #0a0a0a;">1</div>
<div style="position:absolute;left:199.20px;top:103.00px;font-size:24px;line-height:24px;color:#0a0a0a;font-weight:400;white-space:nowrap;-webkit-text-stroke:0.4px #0a0a0a;letter-spacing:0.3px;">John</div>
<div style="position:absolute;left:510.70px;top:103.00px;font-size:24px;line-height:24px;color:#0a0a0a;font-weight:400;white-space:nowrap;-webkit-text-stroke:0.4px #0a0a0a;letter-spacing:0.3px;">Doe</div>
<div style="position:absolute;left:822.20px;top:103.00px;font-size:24px;line-height:24px;color:#0a0a0a;font-weight:400;white-space:nowrap;-webkit-text-stroke:0.4px #0a0a0a;letter-spacing:0.3px;">john.doe@example.com</div>
<div style="position:absolute;left:1252.20px;top:103.00px;font-size:24px;line-height:24px;color:#0a0a0a;font-weight:400;white-space:nowrap;-webkit-text-stroke:0.4px #0a0a0a;letter-spacing:0.3px;">permanent</div>
<div style="position:absolute;left:1594.70px;top:103.00px;font-size:24px;line-height:24px;color:#0a0a0a;font-weight:400;white-space:nowrap;-webkit-text-stroke:0.4px #0a0a0a;">2024-01-15</div>
<div style="position:absolute;left:1904.70px;top:103.00px;font-size:24px;line-height:24px;color:#0a0a0a;font-weight:400;white-space:nowrap;-webkit-text-stroke:0.4px #0a0a0a;letter-spacing:0.3px;">default</div>
<div style="position:absolute;left:2247.70px;top:103.00px;font-size:24px;line-height:24px;color:#0a0a0a;font-weight:400;white-space:nowrap;-webkit-text-stroke:0.4px #0a0a0a;">100</div>
<div style="position:absolute;left:2559.20px;top:103.00px;font-size:24px;line-height:24px;color:#0a0a0a;font-weight:400;white-space:nowrap;-webkit-text-stroke:0.4px #0a0a0a;letter-spacing:0.3px;">Software Engineer</div>
<svg style="position:absolute;left:2914.70px;top:100.72px;" width="28" height="28" viewBox="0 0 24 24" fill="none" stroke="#0a0a0a" stroke-width="2" stroke-linecap="round" stroke-linejoin="round"><polygon points="5 4 15 12 5 20 5 4"/><line x1="19" x2="19" y1="5" y2="19"/></svg>
<div style="position:absolute;left:0.00px;top:152.43px;width:3015.10px;height:75.43px;background:#efefef;"></div>
<svg style="position:absolute;left:29.20px;top:176.65px;" width="27" height="27" viewBox="0 0 24 24" fill="none" stroke="#16a34a" stroke-width="1.7" stroke-linecap="round" stroke-linejoin="round"><circle cx="12" cy="12" r="10"/><path d="m9 12 2 2 4-4"/></svg>
<div style="position:absolute;left:113.70px;top:180.43px;font-size:24px;line-height:24px;color:#0a0a0a;font-weight:400;white-space:nowrap;-webkit-text-stroke:0.4px #0a0a0a;">2</div>
<div style="position:absolute;left:199.20px;top:178.43px;font-size:24px;line-height:24px;color:#0a0a0a;font-weight:400;white-space:nowrap;-webkit-text-stroke:0.4px #0a0a0a;letter-spacing:0.3px;">Jane</div>
<div style="position:absolute;left:510.70px;top:178.43px;font-size:24px;line-height:24px;color:#0a0a0a;font-weight:400;white-space:nowrap;-webkit-text-stroke:0.4px #0a0a0a;letter-spacing:0.3px;">Smith</div>
<div style="position:absolute;left:822.20px;top:178.43px;font-size:24px;line-height:24px;color:#0a0a0a;font-weight:400;white-space:nowrap;-webkit-text-stroke:0.4px #0a0a0a;letter-spacing:0.3px;">jane.smith@example.com</div>
<div style="position:absolute;left:1252.20px;top:178.43px;font-size:24px;line-height:24px;color:#0a0a0a;font-weight:400;white-space:nowrap;-webkit-text-stroke:0.4px #0a0a0a;letter-spacing:0.3px;">permanent</div>
<div style="position:absolute;left:1594.70px;top:178.43px;font-size:24px;line-height:24px;color:#0a0a0a;font-weight:400;white-space:nowrap;-webkit-text-stroke:0.4px #0a0a0a;">2024-02-01</div>
<div style="position:absolute;left:1904.70px;top:178.43px;font-size:24px;line-height:24px;color:#0a0a0a;font-weight:400;white-space:nowrap;-webkit-text-stroke:0.4px #0a0a0a;letter-spacing:0.3px;">hr</div>
<div style="position:absolute;left:2247.70px;top:178.43px;font-size:24px;line-height:24px;color:#0a0a0a;font-weight:400;white-space:nowrap;-webkit-text-stroke:0.4px #0a0a0a;">100</div>
<div style="position:absolute;left:2559.20px;top:178.43px;font-size:24px;line-height:24px;color:#0a0a0a;font-weight:400;white-space:nowrap;-webkit-text-stroke:0.4px #0a0a0a;letter-spacing:0.3px;">HR Manager</div>
<svg style="position:absolute;left:2914.70px;top:176.15px;" width="28" height="28" viewBox="0 0 24 24" fill="none" stroke="#0a0a0a" stroke-width="2" stroke-linecap="round" stroke-linejoin="round"><polygon points="5 4 15 12 5 20 5 4"/><line x1="19" x2="19" y1="5" y2="19"/></svg>
<div style="position:absolute;left:0.00px;top:227.86px;width:3015.10px;height:75.43px;background:#ffffff;"></div>
<div style="position:absolute;left:793.30px;top:227.86px;width:430.00px;height:75.43px;background:#fdf1f1;"></div>
<svg style="position:absolute;left:1169.30px;top:252.08px;" width="27" height="27" viewBox="0 0 24 24" fill="none" stroke="#e7000b" stroke-width="1.6" stroke-linecap="round" stroke-linejoin="round"><path d="m21.73 18-8-14a2 2 0 0 0-3.48 0l-8 14A2 2 0 0 0 4 21h16a2 2 0 0 0 1.73-3"/><path d="M12 9v4"/><path d="M12 17h.01"/></svg>
<svg style="position:absolute;left:29.20px;top:252.08px;" width="27" height="27" viewBox="0 0 24 24" fill="none" stroke="#e7000b" stroke-width="1.7" stroke-linecap="round" stroke-linejoin="round"><circle cx="12" cy="12" r="10"/><line x1="12" x2="12" y1="8" y2="12"/><line x1="12" x2="12.01" y1="16" y2="16"/></svg>
<div style="position:absolute;left:113.70px;top:255.86px;font-size:24px;line-height:24px;color:#0a0a0a;font-weight:400;white-space:nowrap;-webkit-text-stroke:0.4px #0a0a0a;">3</div>
<div style="position:absolute;left:199.20px;top:253.86px;font-size:24px;line-height:24px;color:#0a0a0a;font-weight:400;white-space:nowrap;-webkit-text-stroke:0.4px #0a0a0a;letter-spacing:0.3px;">Mike</div>
<div style="position:absolute;left:510.70px;top:253.86px;font-size:24px;line-height:24px;color:#0a0a0a;font-weight:400;white-space:nowrap;-webkit-text-stroke:0.4px #0a0a0a;letter-spacing:0.3px;">Johnson</div>
<div style="position:absolute;left:822.20px;top:253.86px;font-size:24px;line-height:24px;color:#0a0a0a;font-weight:400;white-space:nowrap;-webkit-text-stroke:0.4px #0a0a0a;letter-spacing:0.3px;"></div>
<div style="position:absolute;left:1252.20px;top:253.86px;font-size:24px;line-height:24px;color:#0a0a0a;font-weight:400;white-space:nowrap;-webkit-text-stroke:0.4px #0a0a0a;letter-spacing:0.3px;">permanent</div>
<div style="position:absolute;left:1594.70px;top:253.86px;font-size:24px;line-height:24px;color:#0a0a0a;font-weight:400;white-space:nowrap;-webkit-text-stroke:0.4px #0a0a0a;">2024-03-10</div>
<div style="position:absolute;left:1904.70px;top:253.86px;font-size:24px;line-height:24px;color:#0a0a0a;font-weight:400;white-space:nowrap;-webkit-text-stroke:0.4px #0a0a0a;letter-spacing:0.3px;">default</div>
<div style="position:absolute;left:2247.70px;top:253.86px;font-size:24px;line-height:24px;color:#0a0a0a;font-weight:400;white-space:nowrap;-webkit-text-stroke:0.4px #0a0a0a;">100</div>
<div style="position:absolute;left:2559.20px;top:253.86px;font-size:24px;line-height:24px;color:#0a0a0a;font-weight:400;white-space:nowrap;-webkit-text-stroke:0.4px #0a0a0a;letter-spacing:0.3px;">Product Designer</div>
<svg style="position:absolute;left:2914.70px;top:251.58px;" width="28" height="28" viewBox="0 0 24 24" fill="none" stroke="#0a0a0a" stroke-width="2" stroke-linecap="round" stroke-linejoin="round"><polygon points="5 4 15 12 5 20 5 4"/><line x1="19" x2="19" y1="5" y2="19"/></svg>
<div style="position:absolute;left:0.00px;top:303.29px;width:3015.10px;height:75.43px;background:#efefef;"></div>
<div style="position:absolute;left:1223.30px;top:303.29px;width:343.70px;height:75.43px;background:#fdf1f1;"></div>
<svg style="position:absolute;left:1513.00px;top:327.50px;" width="27" height="27" viewBox="0 0 24 24" fill="none" stroke="#e7000b" stroke-width="1.6" stroke-linecap="round" stroke-linejoin="round"><path d="m21.73 18-8-14a2 2 0 0 0-3.48 0l-8 14A2 2 0 0 0 4 21h16a2 2 0 0 0 1.73-3"/><path d="M12 9v4"/><path d="M12 17h.01"/></svg>
<svg style="position:absolute;left:29.20px;top:327.50px;" width="27" height="27" viewBox="0 0 24 24" fill="none" stroke="#e7000b" stroke-width="1.7" stroke-linecap="round" stroke-linejoin="round"><circle cx="12" cy="12" r="10"/><line x1="12" x2="12" y1="8" y2="12"/><line x1="12" x2="12.01" y1="16" y2="16"/></svg>
<div style="position:absolute;left:113.70px;top:331.29px;font-size:24px;line-height:24px;color:#0a0a0a;font-weight:400;white-space:nowrap;-webkit-text-stroke:0.4px #0a0a0a;">4</div>
<div style="position:absolute;left:199.20px;top:329.29px;font-size:24px;line-height:24px;color:#0a0a0a;font-weight:400;white-space:nowrap;-webkit-text-stroke:0.4px #0a0a0a;letter-spacing:0.3px;">Emily</div>
<div style="position:absolute;left:510.70px;top:329.29px;font-size:24px;line-height:24px;color:#0a0a0a;font-weight:400;white-space:nowrap;-webkit-text-stroke:0.4px #0a0a0a;letter-spacing:0.3px;">Williams</div>
<div style="position:absolute;left:822.20px;top:329.29px;font-size:24px;line-height:24px;color:#0a0a0a;font-weight:400;white-space:nowrap;-webkit-text-stroke:0.4px #0a0a0a;letter-spacing:0.3px;">emily.williams@example.com</div>
<div style="position:absolute;left:1252.20px;top:329.29px;font-size:24px;line-height:24px;color:#0a0a0a;font-weight:400;white-space:nowrap;-webkit-text-stroke:0.4px #0a0a0a;letter-spacing:0.3px;">invalid_contract</div>
<div style="position:absolute;left:1594.70px;top:329.29px;font-size:24px;line-height:24px;color:#0a0a0a;font-weight:400;white-space:nowrap;-webkit-text-stroke:0.4px #0a0a0a;">2024-04-05</div>
<div style="position:absolute;left:1904.70px;top:329.29px;font-size:24px;line-height:24px;color:#0a0a0a;font-weight:400;white-space:nowrap;-webkit-text-stroke:0.4px #0a0a0a;letter-spacing:0.3px;">admin</div>
<div style="position:absolute;left:2247.70px;top:329.29px;font-size:24px;line-height:24px;color:#0a0a0a;font-weight:400;white-space:nowrap;-webkit-text-stroke:0.4px #0a0a0a;">100</div>
<div style="position:absolute;left:2559.20px;top:329.29px;font-size:24px;line-height:24px;color:#0a0a0a;font-weight:400;white-space:nowrap;-webkit-text-stroke:0.4px #0a0a0a;letter-spacing:0.3px;">CTO</div>
<svg style="position:absolute;left:2914.70px;top:327.00px;" width="28" height="28" viewBox="0 0 24 24" fill="none" stroke="#0a0a0a" stroke-width="2" stroke-linecap="round" stroke-linejoin="round"><polygon points="5 4 15 12 5 20 5 4"/><line x1="19" x2="19" y1="5" y2="19"/></svg>
<div style="position:absolute;left:0.00px;top:378.72px;width:3015.10px;height:75.43px;background:#ffffff;"></div>
<svg style="position:absolute;left:29.20px;top:402.94px;" width="27" height="27" viewBox="0 0 24 24" fill="none" stroke="#16a34a" stroke-width="1.7" stroke-linecap="round" stroke-linejoin="round"><circle cx="12" cy="12" r="10"/><path d="m9 12 2 2 4-4"/></svg>
<div style="position:absolute;left:113.70px;top:406.72px;font-size:24px;line-height:24px;color:#0a0a0a;font-weight:400;white-space:nowrap;-webkit-text-stroke:0.4px #0a0a0a;">5</div>
<div style="position:absolute;left:199.20px;top:404.72px;font-size:24px;line-height:24px;color:#0a0a0a;font-weight:400;white-space:nowrap;-webkit-text-stroke:0.4px #0a0a0a;letter-spacing:0.3px;">David</div>
<div style="position:absolute;left:510.70px;top:404.72px;font-size:24px;line-height:24px;color:#0a0a0a;font-weight:400;white-space:nowrap;-webkit-text-stroke:0.4px #0a0a0a;letter-spacing:0.3px;">Brown</div>
<div style="position:absolute;left:822.20px;top:404.72px;font-size:24px;line-height:24px;color:#0a0a0a;font-weight:400;white-space:nowrap;-webkit-text-stroke:0.4px #0a0a0a;letter-spacing:0.3px;">david.brown@example.com</div>
<div style="position:absolute;left:1252.20px;top:404.72px;font-size:24px;line-height:24px;color:#0a0a0a;font-weight:400;white-space:nowrap;-webkit-text-stroke:0.4px #0a0a0a;letter-spacing:0.3px;">permanent</div>
<div style="position:absolute;left:1594.70px;top:404.72px;font-size:24px;line-height:24px;color:#0a0a0a;font-weight:400;white-space:nowrap;-webkit-text-stroke:0.4px #0a0a0a;">2024-05-20</div>
<div style="position:absolute;left:1904.70px;top:404.72px;font-size:24px;line-height:24px;color:#0a0a0a;font-weight:400;white-space:nowrap;-webkit-text-stroke:0.4px #0a0a0a;letter-spacing:0.3px;">approver</div>
<div style="position:absolute;left:2247.70px;top:404.72px;font-size:24px;line-height:24px;color:#0a0a0a;font-weight:400;white-space:nowrap;-webkit-text-stroke:0.4px #0a0a0a;">100</div>
<div style="position:absolute;left:2559.20px;top:404.72px;font-size:24px;line-height:24px;color:#0a0a0a;font-weight:400;white-space:nowrap;-webkit-text-stroke:0.4px #0a0a0a;letter-spacing:0.3px;">Team Lead</div>
<svg style="position:absolute;left:2914.70px;top:402.44px;" width="28" height="28" viewBox="0 0 24 24" fill="none" stroke="#0a0a0a" stroke-width="2" stroke-linecap="round" stroke-linejoin="round"><polygon points="5 4 15 12 5 20 5 4"/><line x1="19" x2="19" y1="5" y2="19"/></svg>
<div style="position:absolute;left:0.00px;top:454.15px;width:3015.10px;height:75.43px;background:#efefef;"></div>
<svg style="position:absolute;left:29.20px;top:478.37px;" width="27" height="27" viewBox="0 0 24 24" fill="none" stroke="#16a34a" stroke-width="1.7" stroke-linecap="round" stroke-linejoin="round"><circle cx="12" cy="12" r="10"/><path d="m9 12 2 2 4-4"/></svg>
<div style="position:absolute;left:113.70px;top:482.15px;font-size:24px;line-height:24px;color:#0a0a0a;font-weight:400;white-space:nowrap;-webkit-text-stroke:0.4px #0a0a0a;">6</div>
<div style="position:absolute;left:199.20px;top:480.15px;font-size:24px;line-height:24px;color:#0a0a0a;font-weight:400;white-space:nowrap;-webkit-text-stroke:0.4px #0a0a0a;letter-spacing:0.3px;">Sarah</div>
<div style="position:absolute;left:510.70px;top:480.15px;font-size:24px;line-height:24px;color:#0a0a0a;font-weight:400;white-space:nowrap;-webkit-text-stroke:0.4px #0a0a0a;letter-spacing:0.3px;">Davis</div>
<div style="position:absolute;left:822.20px;top:480.15px;font-size:24px;line-height:24px;color:#0a0a0a;font-weight:400;white-space:nowrap;-webkit-text-stroke:0.4px #0a0a0a;letter-spacing:0.3px;">sarah.davis@example.com</div>
<div style="position:absolute;left:1252.20px;top:480.15px;font-size:24px;line-height:24px;color:#0a0a0a;font-weight:400;white-space:nowrap;-webkit-text-stroke:0.4px #0a0a0a;letter-spacing:0.3px;">fixed_term</div>
<div style="position:absolute;left:1594.70px;top:480.15px;font-size:24px;line-height:24px;color:#0a0a0a;font-weight:400;white-space:nowrap;-webkit-text-stroke:0.4px #0a0a0a;">2024-06-15</div>
<div style="position:absolute;left:1904.70px;top:480.15px;font-size:24px;line-height:24px;color:#0a0a0a;font-weight:400;white-space:nowrap;-webkit-text-stroke:0.4px #0a0a0a;letter-spacing:0.3px;">default</div>
<div style="position:absolute;left:2247.70px;top:480.15px;font-size:24px;line-height:24px;color:#0a0a0a;font-weight:400;white-space:nowrap;-webkit-text-stroke:0.4px #0a0a0a;">100</div>
<div style="position:absolute;left:2559.20px;top:480.15px;font-size:24px;line-height:24px;color:#0a0a0a;font-weight:400;white-space:nowrap;-webkit-text-stroke:0.4px #0a0a0a;letter-spacing:0.3px;">Marketing Specialist</div>
<svg style="position:absolute;left:2914.70px;top:477.87px;" width="28" height="28" viewBox="0 0 24 24" fill="none" stroke="#0a0a0a" stroke-width="2" stroke-linecap="round" stroke-linejoin="round"><polygon points="5 4 15 12 5 20 5 4"/><line x1="19" x2="19" y1="5" y2="19"/></svg>
<div style="position:absolute;left:0.00px;top:529.58px;width:3015.10px;height:75.43px;background:#ffffff;"></div>
<svg style="position:absolute;left:29.20px;top:553.80px;" width="27" height="27" viewBox="0 0 24 24" fill="none" stroke="#16a34a" stroke-width="1.7" stroke-linecap="round" stroke-linejoin="round"><circle cx="12" cy="12" r="10"/><path d="m9 12 2 2 4-4"/></svg>
<div style="position:absolute;left:113.70px;top:557.58px;font-size:24px;line-height:24px;color:#0a0a0a;font-weight:400;white-space:nowrap;-webkit-text-stroke:0.4px #0a0a0a;">7</div>
<div style="position:absolute;left:199.20px;top:555.58px;font-size:24px;line-height:24px;color:#0a0a0a;font-weight:400;white-space:nowrap;-webkit-text-stroke:0.4px #0a0a0a;letter-spacing:0.3px;">Robert</div>
<div style="position:absolute;left:510.70px;top:555.58px;font-size:24px;line-height:24px;color:#0a0a0a;font-weight:400;white-space:nowrap;-webkit-text-stroke:0.4px #0a0a0a;letter-spacing:0.3px;">Miller</div>
<div style="position:absolute;left:822.20px;top:555.58px;font-size:24px;line-height:24px;color:#0a0a0a;font-weight:400;white-space:nowrap;-webkit-text-stroke:0.4px #0a0a0a;letter-spacing:0.3px;">robert.miller@example.com</div>
<div style="position:absolute;left:1252.20px;top:555.58px;font-size:24px;line-height:24px;color:#0a0a0a;font-weight:400;white-space:nowrap;-webkit-text-stroke:0.4px #0a0a0a;letter-spacing:0.3px;">contractor</div>
<div style="position:absolute;left:1594.70px;top:555.58px;font-size:24px;line-height:24px;color:#0a0a0a;font-weight:400;white-space:nowrap;-webkit-text-stroke:0.4px #0a0a0a;">2024-07-01</div>
<div style="position:absolute;left:1904.70px;top:555.58px;font-size:24px;line-height:24px;color:#0a0a0a;font-weight:400;white-space:nowrap;-webkit-text-stroke:0.4px #0a0a0a;letter-spacing:0.3px;">default</div>
<div style="position:absolute;left:2247.70px;top:555.58px;font-size:24px;line-height:24px;color:#0a0a0a;font-weight:400;white-space:nowrap;-webkit-text-stroke:0.4px #0a0a0a;">80</div>
<div style="position:absolute;left:2559.20px;top:555.58px;font-size:24px;line-height:24px;color:#0a0a0a;font-weight:400;white-space:nowrap;-webkit-text-stroke:0.4px #0a0a0a;letter-spacing:0.3px;">Consultant</div>
<svg style="position:absolute;left:2914.70px;top:553.30px;" width="28" height="28" viewBox="0 0 24 24" fill="none" stroke="#0a0a0a" stroke-width="2" stroke-linecap="round" stroke-linejoin="round"><polygon points="5 4 15 12 5 20 5 4"/><line x1="19" x2="19" y1="5" y2="19"/></svg>
<div style="position:absolute;left:0.00px;top:605.01px;width:3015.10px;height:75.43px;background:#efefef;"></div>
<svg style="position:absolute;left:29.20px;top:629.22px;" width="27" height="27" viewBox="0 0 24 24" fill="none" stroke="#16a34a" stroke-width="1.7" stroke-linecap="round" stroke-linejoin="round"><circle cx="12" cy="12" r="10"/><path d="m9 12 2 2 4-4"/></svg>
<div style="position:absolute;left:113.70px;top:633.01px;font-size:24px;line-height:24px;color:#0a0a0a;font-weight:400;white-space:nowrap;-webkit-text-stroke:0.4px #0a0a0a;">8</div>
<div style="position:absolute;left:199.20px;top:631.01px;font-size:24px;line-height:24px;color:#0a0a0a;font-weight:400;white-space:nowrap;-webkit-text-stroke:0.4px #0a0a0a;letter-spacing:0.3px;">Lisa</div>
<div style="position:absolute;left:510.70px;top:631.01px;font-size:24px;line-height:24px;color:#0a0a0a;font-weight:400;white-space:nowrap;-webkit-text-stroke:0.4px #0a0a0a;letter-spacing:0.3px;">Wilson</div>
<div style="position:absolute;left:822.20px;top:631.01px;font-size:24px;line-height:24px;color:#0a0a0a;font-weight:400;white-space:nowrap;-webkit-text-stroke:0.4px #0a0a0a;letter-spacing:0.3px;">lisa.wilson@example.com</div>
<div style="position:absolute;left:1252.20px;top:631.01px;font-size:24px;line-height:24px;color:#0a0a0a;font-weight:400;white-space:nowrap;-webkit-text-stroke:0.4px #0a0a0a;letter-spacing:0.3px;">part_time</div>
<div style="position:absolute;left:1594.70px;top:631.01px;font-size:24px;line-height:24px;color:#0a0a0a;font-weight:400;white-space:nowrap;-webkit-text-stroke:0.4px #0a0a0a;">2024-08-10</div>
<div style="position:absolute;left:1904.70px;top:631.01px;font-size:24px;line-height:24px;color:#0a0a0a;font-weight:400;white-space:nowrap;-webkit-text-stroke:0.4px #0a0a0a;letter-spacing:0.3px;">default</div>
<div style="position:absolute;left:2247.70px;top:631.01px;font-size:24px;line-height:24px;color:#0a0a0a;font-weight:400;white-space:nowrap;-webkit-text-stroke:0.4px #0a0a0a;">50</div>
<div style="position:absolute;left:2559.20px;top:631.01px;font-size:24px;line-height:24px;color:#0a0a0a;font-weight:400;white-space:nowrap;-webkit-text-stroke:0.4px #0a0a0a;letter-spacing:0.3px;">Customer Support</div>
<svg style="position:absolute;left:2914.70px;top:628.72px;" width="28" height="28" viewBox="0 0 24 24" fill="none" stroke="#0a0a0a" stroke-width="2" stroke-linecap="round" stroke-linejoin="round"><polygon points="5 4 15 12 5 20 5 4"/><line x1="19" x2="19" y1="5" y2="19"/></svg>
<div style="position:absolute;left:0.00px;top:680.44px;width:3015.10px;height:75.43px;background:#ffffff;"></div>
<div style="position:absolute;left:1567.00px;top:680.44px;width:309.30px;height:75.43px;background:#fdf1f1;"></div>
<svg style="position:absolute;left:1822.30px;top:704.65px;" width="27" height="27" viewBox="0 0 24 24" fill="none" stroke="#e7000b" stroke-width="1.6" stroke-linecap="round" stroke-linejoin="round"><path d="m21.73 18-8-14a2 2 0 0 0-3.48 0l-8 14A2 2 0 0 0 4 21h16a2 2 0 0 0 1.73-3"/><path d="M12 9v4"/><path d="M12 17h.01"/></svg>
<svg style="position:absolute;left:29.20px;top:704.65px;" width="27" height="27" viewBox="0 0 24 24" fill="none" stroke="#e7000b" stroke-width="1.7" stroke-linecap="round" stroke-linejoin="round"><circle cx="12" cy="12" r="10"/><line x1="12" x2="12" y1="8" y2="12"/><line x1="12" x2="12.01" y1="16" y2="16"/></svg>
<div style="position:absolute;left:113.70px;top:708.44px;font-size:24px;line-height:24px;color:#0a0a0a;font-weight:400;white-space:nowrap;-webkit-text-stroke:0.4px #0a0a0a;">9</div>
<div style="position:absolute;left:199.20px;top:706.44px;font-size:24px;line-height:24px;color:#0a0a0a;font-weight:400;white-space:nowrap;-webkit-text-stroke:0.4px #0a0a0a;letter-spacing:0.3px;">James</div>
<div style="position:absolute;left:510.70px;top:706.44px;font-size:24px;line-height:24px;color:#0a0a0a;font-weight:400;white-space:nowrap;-webkit-text-stroke:0.4px #0a0a0a;letter-spacing:0.3px;">Taylor</div>
<div style="position:absolute;left:822.20px;top:706.44px;font-size:24px;line-height:24px;color:#0a0a0a;font-weight:400;white-space:nowrap;-webkit-text-stroke:0.4px #0a0a0a;letter-spacing:0.3px;">james.taylor@example.com</div>
<div style="position:absolute;left:1252.20px;top:706.44px;font-size:24px;line-height:24px;color:#0a0a0a;font-weight:400;white-space:nowrap;-webkit-text-stroke:0.4px #0a0a0a;letter-spacing:0.3px;">permanent</div>
<div style="position:absolute;left:1594.70px;top:706.44px;font-size:24px;line-height:24px;color:#0a0a0a;font-weight:400;white-space:nowrap;-webkit-text-stroke:0.4px #0a0a0a;">invalid-date</div>
<div style="position:absolute;left:1904.70px;top:706.44px;font-size:24px;line-height:24px;color:#0a0a0a;font-weight:400;white-space:nowrap;-webkit-text-stroke:0.4px #0a0a0a;letter-spacing:0.3px;">default</div>
<div style="position:absolute;left:2247.70px;top:706.44px;font-size:24px;line-height:24px;color:#0a0a0a;font-weight:400;white-space:nowrap;-webkit-text-stroke:0.4px #0a0a0a;">100</div>
<div style="position:absolute;left:2559.20px;top:706.44px;font-size:24px;line-height:24px;color:#0a0a0a;font-weight:400;white-space:nowrap;-webkit-text-stroke:0.4px #0a0a0a;letter-spacing:0.3px;">Backend Developer</div>
<svg style="position:absolute;left:2914.70px;top:704.15px;" width="28" height="28" viewBox="0 0 24 24" fill="none" stroke="#0a0a0a" stroke-width="2" stroke-linecap="round" stroke-linejoin="round"><polygon points="5 4 15 12 5 20 5 4"/><line x1="19" x2="19" y1="5" y2="19"/></svg>
<div style="position:absolute;left:0.00px;top:755.87px;width:3015.10px;height:75.43px;background:#efefef;"></div>
<svg style="position:absolute;left:29.20px;top:780.09px;" width="27" height="27" viewBox="0 0 24 24" fill="none" stroke="#16a34a" stroke-width="1.7" stroke-linecap="round" stroke-linejoin="round"><circle cx="12" cy="12" r="10"/><path d="m9 12 2 2 4-4"/></svg>
<div style="position:absolute;left:113.70px;top:783.87px;font-size:24px;line-height:24px;color:#0a0a0a;font-weight:400;white-space:nowrap;-webkit-text-stroke:0.4px #0a0a0a;">10</div>
<div style="position:absolute;left:199.20px;top:781.87px;font-size:24px;line-height:24px;color:#0a0a0a;font-weight:400;white-space:nowrap;-webkit-text-stroke:0.4px #0a0a0a;letter-spacing:0.3px;">Jennifer</div>
<div style="position:absolute;left:510.70px;top:781.87px;font-size:24px;line-height:24px;color:#0a0a0a;font-weight:400;white-space:nowrap;-webkit-text-stroke:0.4px #0a0a0a;letter-spacing:0.3px;">Anderson</div>
<div style="position:absolute;left:822.20px;top:781.87px;font-size:24px;line-height:24px;color:#0a0a0a;font-weight:400;white-space:nowrap;-webkit-text-stroke:0.4px #0a0a0a;letter-spacing:0.3px;">jennifer.anderson@example.com</div>
<div style="position:absolute;left:1252.20px;top:781.87px;font-size:24px;line-height:24px;color:#0a0a0a;font-weight:400;white-space:nowrap;-webkit-text-stroke:0.4px #0a0a0a;letter-spacing:0.3px;">intern</div>
<div style="position:absolute;left:1594.70px;top:781.87px;font-size:24px;line-height:24px;color:#0a0a0a;font-weight:400;white-space:nowrap;-webkit-text-stroke:0.4px #0a0a0a;">2024-09-01</div>
<div style="position:absolute;left:1904.70px;top:781.87px;font-size:24px;line-height:24px;color:#0a0a0a;font-weight:400;white-space:nowrap;-webkit-text-stroke:0.4px #0a0a0a;letter-spacing:0.3px;">default</div>
<div style="position:absolute;left:2247.70px;top:781.87px;font-size:24px;line-height:24px;color:#0a0a0a;font-weight:400;white-space:nowrap;-webkit-text-stroke:0.4px #0a0a0a;">100</div>
<div style="position:absolute;left:2559.20px;top:781.87px;font-size:24px;line-height:24px;color:#0a0a0a;font-weight:400;white-space:nowrap;-webkit-text-stroke:0.4px #0a0a0a;letter-spacing:0.3px;">Intern Developer</div>
<svg style="position:absolute;left:2914.70px;top:779.59px;" width="28" height="28" viewBox="0 0 24 24" fill="none" stroke="#0a0a0a" stroke-width="2" stroke-linecap="round" stroke-linejoin="round"><polygon points="5 4 15 12 5 20 5 4"/><line x1="19" x2="19" y1="5" y2="19"/></svg>
<div style="position:absolute;left:0.00px;top:831.30px;width:3015.10px;height:75.43px;background:#ffffff;"></div>
<svg style="position:absolute;left:29.20px;top:855.52px;" width="27" height="27" viewBox="0 0 24 24" fill="none" stroke="#16a34a" stroke-width="1.7" stroke-linecap="round" stroke-linejoin="round"><circle cx="12" cy="12" r="10"/><path d="m9 12 2 2 4-4"/></svg>
<div style="position:absolute;left:113.70px;top:859.30px;font-size:24px;line-height:24px;color:#0a0a0a;font-weight:400;white-space:nowrap;-webkit-text-stroke:0.4px #0a0a0a;">11</div>
<div style="position:absolute;left:199.20px;top:857.30px;font-size:24px;line-height:24px;color:#0a0a0a;font-weight:400;white-space:nowrap;-webkit-text-stroke:0.4px #0a0a0a;letter-spacing:0.3px;">William</div>
<div style="position:absolute;left:510.70px;top:857.30px;font-size:24px;line-height:24px;color:#0a0a0a;font-weight:400;white-space:nowrap;-webkit-text-stroke:0.4px #0a0a0a;letter-spacing:0.3px;">Thomas</div>
<div style="position:absolute;left:822.20px;top:857.30px;font-size:24px;line-height:24px;color:#0a0a0a;font-weight:400;white-space:nowrap;-webkit-text-stroke:0.4px #0a0a0a;letter-spacing:0.3px;">william.thomas@example.com</div>
<div style="position:absolute;left:1252.20px;top:857.30px;font-size:24px;line-height:24px;color:#0a0a0a;font-weight:400;white-space:nowrap;-webkit-text-stroke:0.4px #0a0a0a;letter-spacing:0.3px;">permanent</div>
<div style="position:absolute;left:1594.70px;top:857.30px;font-size:24px;line-height:24px;color:#0a0a0a;font-weight:400;white-space:nowrap;-webkit-text-stroke:0.4px #0a0a0a;">2024-10-15</div>
<div style="position:absolute;left:1904.70px;top:857.30px;font-size:24px;line-height:24px;color:#0a0a0a;font-weight:400;white-space:nowrap;-webkit-text-stroke:0.4px #0a0a0a;letter-spacing:0.3px;">default</div>
<div style="position:absolute;left:2247.70px;top:857.30px;font-size:24px;line-height:24px;color:#0a0a0a;font-weight:400;white-space:nowrap;-webkit-text-stroke:0.4px #0a0a0a;">100</div>
<div style="position:absolute;left:2559.20px;top:857.30px;font-size:24px;line-height:24px;color:#0a0a0a;font-weight:400;white-space:nowrap;-webkit-text-stroke:0.4px #0a0a0a;letter-spacing:0.3px;">DevOps Engineer</div>
<svg style="position:absolute;left:2914.70px;top:855.02px;" width="28" height="28" viewBox="0 0 24 24" fill="none" stroke="#0a0a0a" stroke-width="2" stroke-linecap="round" stroke-linejoin="round"><polygon points="5 4 15 12 5 20 5 4"/><line x1="19" x2="19" y1="5" y2="19"/></svg>
<div style="position:absolute;left:0.00px;top:906.73px;width:3015.10px;height:75.43px;background:#efefef;"></div>
<div style="position:absolute;left:1876.30px;top:906.73px;width:342.90px;height:75.43px;background:#fdf1f1;"></div>
<svg style="position:absolute;left:2165.20px;top:930.94px;" width="27" height="27" viewBox="0 0 24 24" fill="none" stroke="#e7000b" stroke-width="1.6" stroke-linecap="round" stroke-linejoin="round"><path d="m21.73 18-8-14a2 2 0 0 0-3.48 0l-8 14A2 2 0 0 0 4 21h16a2 2 0 0 0 1.73-3"/><path d="M12 9v4"/><path d="M12 17h.01"/></svg>
<svg style="position:absolute;left:29.20px;top:930.94px;" width="27" height="27" viewBox="0 0 24 24" fill="none" stroke="#e7000b" stroke-width="1.7" stroke-linecap="round" stroke-linejoin="round"><circle cx="12" cy="12" r="10"/><line x1="12" x2="12" y1="8" y2="12"/><line x1="12" x2="12.01" y1="16" y2="16"/></svg>
<div style="position:absolute;left:113.70px;top:934.73px;font-size:24px;line-height:24px;color:#0a0a0a;font-weight:400;white-space:nowrap;-webkit-text-stroke:0.4px #0a0a0a;">12</div>
<div style="position:absolute;left:199.20px;top:932.73px;font-size:24px;line-height:24px;color:#0a0a0a;font-weight:400;white-space:nowrap;-webkit-text-stroke:0.4px #0a0a0a;letter-spacing:0.3px;">Patricia</div>
<div style="position:absolute;left:510.70px;top:932.73px;font-size:24px;line-height:24px;color:#0a0a0a;font-weight:400;white-space:nowrap;-webkit-text-stroke:0.4px #0a0a0a;letter-spacing:0.3px;">Jackson</div>
<div style="position:absolute;left:822.20px;top:932.73px;font-size:24px;line-height:24px;color:#0a0a0a;font-weight:400;white-space:nowrap;-webkit-text-stroke:0.4px #0a0a0a;letter-spacing:0.3px;">patricia.jackson@example.com</div>
<div style="position:absolute;left:1252.20px;top:932.73px;font-size:24px;line-height:24px;color:#0a0a0a;font-weight:400;white-space:nowrap;-webkit-text-stroke:0.4px #0a0a0a;letter-spacing:0.3px;">permanent</div>
<div style="position:absolute;left:1594.70px;top:932.73px;font-size:24px;line-height:24px;color:#0a0a0a;font-weight:400;white-space:nowrap;-webkit-text-stroke:0.4px #0a0a0a;">2024-11-01</div>
<div style="position:absolute;left:1904.70px;top:932.73px;font-size:24px;line-height:24px;color:#0a0a0a;font-weight:400;white-space:nowrap;-webkit-text-stroke:0.4px #0a0a0a;letter-spacing:0.3px;">unknown_role</div>
<div style="position:absolute;left:2247.70px;top:932.73px;font-size:24px;line-height:24px;color:#0a0a0a;font-weight:400;white-space:nowrap;-webkit-text-stroke:0.4px #0a0a0a;">100</div>
<div style="position:absolute;left:2559.20px;top:932.73px;font-size:24px;line-height:24px;color:#0a0a0a;font-weight:400;white-space:nowrap;-webkit-text-stroke:0.4px #0a0a0a;letter-spacing:0.3px;">Project Manager</div>
<svg style="position:absolute;left:2914.70px;top:930.44px;" width="28" height="28" viewBox="0 0 24 24" fill="none" stroke="#0a0a0a" stroke-width="2" stroke-linecap="round" stroke-linejoin="round"><polygon points="5 4 15 12 5 20 5 4"/><line x1="19" x2="19" y1="5" y2="19"/></svg>
<div style="position:absolute;left:0.00px;top:982.16px;width:3015.10px;height:75.43px;background:#ffffff;"></div>
<svg style="position:absolute;left:29.20px;top:1006.38px;" width="27" height="27" viewBox="0 0 24 24" fill="none" stroke="#16a34a" stroke-width="1.7" stroke-linecap="round" stroke-linejoin="round"><circle cx="12" cy="12" r="10"/><path d="m9 12 2 2 4-4"/></svg>
<div style="position:absolute;left:113.70px;top:1010.16px;font-size:24px;line-height:24px;color:#0a0a0a;font-weight:400;white-space:nowrap;-webkit-text-stroke:0.4px #0a0a0a;">13</div>
<div style="position:absolute;left:199.20px;top:1008.16px;font-size:24px;line-height:24px;color:#0a0a0a;font-weight:400;white-space:nowrap;-webkit-text-stroke:0.4px #0a0a0a;letter-spacing:0.3px;">Christopher</div>
<div style="position:absolute;left:510.70px;top:1008.16px;font-size:24px;line-height:24px;color:#0a0a0a;font-weight:400;white-space:nowrap;-webkit-text-stroke:0.4px #0a0a0a;letter-spacing:0.3px;">White</div>
<div style="position:absolute;left:822.20px;top:1008.16px;font-size:24px;line-height:24px;color:#0a0a0a;font-weight:400;white-space:nowrap;-webkit-text-stroke:0.4px #0a0a0a;letter-spacing:0.3px;">christopher.white@example.com</div>
<div style="position:absolute;left:1252.20px;top:1008.16px;font-size:24px;line-height:24px;color:#0a0a0a;font-weight:400;white-space:nowrap;-webkit-text-stroke:0.4px #0a0a0a;letter-spacing:0.3px;">permanent</div>
<div style="position:absolute;left:1594.70px;top:1008.16px;font-size:24px;line-height:24px;color:#0a0a0a;font-weight:400;white-space:nowrap;-webkit-text-stroke:0.4px #0a0a0a;">2024-01-20</div>
<div style="position:absolute;left:1904.70px;top:1008.16px;font-size:24px;line-height:24px;color:#0a0a0a;font-weight:400;white-space:nowrap;-webkit-text-stroke:0.4px #0a0a0a;letter-spacing:0.3px;">default</div>
<div style="position:absolute;left:2247.70px;top:1008.16px;font-size:24px;line-height:24px;color:#0a0a0a;font-weight:400;white-space:nowrap;-webkit-text-stroke:0.4px #0a0a0a;">100</div>
<div style="position:absolute;left:2559.20px;top:1008.16px;font-size:24px;line-height:24px;color:#0a0a0a;font-weight:400;white-space:nowrap;-webkit-text-stroke:0.4px #0a0a0a;letter-spacing:0.3px;">QA Engineer</div>
<svg style="position:absolute;left:2914.70px;top:1005.88px;" width="28" height="28" viewBox="0 0 24 24" fill="none" stroke="#0a0a0a" stroke-width="2" stroke-linecap="round" stroke-linejoin="round"><polygon points="5 4 15 12 5 20 5 4"/><line x1="19" x2="19" y1="5" y2="19"/></svg>
<div style="position:absolute;left:0.00px;top:1057.59px;width:3015.10px;height:75.43px;background:#efefef;"></div>
<svg style="position:absolute;left:29.20px;top:1081.81px;" width="27" height="27" viewBox="0 0 24 24" fill="none" stroke="#16a34a" stroke-width="1.7" stroke-linecap="round" stroke-linejoin="round"><circle cx="12" cy="12" r="10"/><path d="m9 12 2 2 4-4"/></svg>
<div style="position:absolute;left:113.70px;top:1085.59px;font-size:24px;line-height:24px;color:#0a0a0a;font-weight:400;white-space:nowrap;-webkit-text-stroke:0.4px #0a0a0a;">14</div>
<div style="position:absolute;left:199.20px;top:1083.59px;font-size:24px;line-height:24px;color:#0a0a0a;font-weight:400;white-space:nowrap;-webkit-text-stroke:0.4px #0a0a0a;letter-spacing:0.3px;">Amanda</div>
<div style="position:absolute;left:510.70px;top:1083.59px;font-size:24px;line-height:24px;color:#0a0a0a;font-weight:400;white-space:nowrap;-webkit-text-stroke:0.4px #0a0a0a;letter-spacing:0.3px;">Harris</div>
<div style="position:absolute;left:822.20px;top:1083.59px;font-size:24px;line-height:24px;color:#0a0a0a;font-weight:400;white-space:nowrap;-webkit-text-stroke:0.4px #0a0a0a;letter-spacing:0.3px;">amanda.harris@example.com</div>
<div style="position:absolute;left:1252.20px;top:1083.59px;font-size:24px;line-height:24px;color:#0a0a0a;font-weight:400;white-space:nowrap;-webkit-text-stroke:0.4px #0a0a0a;letter-spacing:0.3px;">fixed_term</div>
<div style="position:absolute;left:1594.70px;top:1083.59px;font-size:24px;line-height:24px;color:#0a0a0a;font-weight:400;white-space:nowrap;-webkit-text-stroke:0.4px #0a0a0a;">2024-02-15</div>
<div style="position:absolute;left:1904.70px;top:1083.59px;font-size:24px;line-height:24px;color:#0a0a0a;font-weight:400;white-space:nowrap;-webkit-text-stroke:0.4px #0a0a0a;letter-spacing:0.3px;">default</div>
<div style="position:absolute;left:2247.70px;top:1083.59px;font-size:24px;line-height:24px;color:#0a0a0a;font-weight:400;white-space:nowrap;-webkit-text-stroke:0.4px #0a0a0a;">100</div>
<div style="position:absolute;left:2559.20px;top:1083.59px;font-size:24px;line-height:24px;color:#0a0a0a;font-weight:400;white-space:nowrap;-webkit-text-stroke:0.4px #0a0a0a;letter-spacing:0.3px;">Data Analyst</div>
<svg style="position:absolute;left:2914.70px;top:1081.31px;" width="28" height="28" viewBox="0 0 24 24" fill="none" stroke="#0a0a0a" stroke-width="2" stroke-linecap="round" stroke-linejoin="round"><polygon points="5 4 15 12 5 20 5 4"/><line x1="19" x2="19" y1="5" y2="19"/></svg>
<div style="position:absolute;left:0.00px;top:1133.02px;width:3015.10px;height:75.43px;background:#ffffff;"></div>
<svg style="position:absolute;left:29.20px;top:1157.23px;" width="27" height="27" viewBox="0 0 24 24" fill="none" stroke="#16a34a" stroke-width="1.7" stroke-linecap="round" stroke-linejoin="round"><circle cx="12" cy="12" r="10"/><path d="m9 12 2 2 4-4"/></svg>
<div style="position:absolute;left:113.70px;top:1161.02px;font-size:24px;line-height:24px;color:#0a0a0a;font-weight:400;white-space:nowrap;-webkit-text-stroke:0.4px #0a0a0a;">15</div>
<div style="position:absolute;left:199.20px;top:1159.02px;font-size:24px;line-height:24px;color:#0a0a0a;font-weight:400;white-space:nowrap;-webkit-text-stroke:0.4px #0a0a0a;letter-spacing:0.3px;">Daniel</div>
<div style="position:absolute;left:510.70px;top:1159.02px;font-size:24px;line-height:24px;color:#0a0a0a;font-weight:400;white-space:nowrap;-webkit-text-stroke:0.4px #0a0a0a;letter-spacing:0.3px;">Martin</div>
<div style="position:absolute;left:822.20px;top:1159.02px;font-size:24px;line-height:24px;color:#0a0a0a;font-weight:400;white-space:nowrap;-webkit-text-stroke:0.4px #0a0a0a;letter-spacing:0.3px;">daniel.martin@example.com</div>
<div style="position:absolute;left:1252.20px;top:1159.02px;font-size:24px;line-height:24px;color:#0a0a0a;font-weight:400;white-space:nowrap;-webkit-text-stroke:0.4px #0a0a0a;letter-spacing:0.3px;">permanent</div>
<div style="position:absolute;left:1594.70px;top:1159.02px;font-size:24px;line-height:24px;color:#0a0a0a;font-weight:400;white-space:nowrap;-webkit-text-stroke:0.4px #0a0a0a;">2024-03-01</div>
<div style="position:absolute;left:1904.70px;top:1159.02px;font-size:24px;line-height:24px;color:#0a0a0a;font-weight:400;white-space:nowrap;-webkit-text-stroke:0.4px #0a0a0a;letter-spacing:0.3px;">default</div>
<div style="position:absolute;left:2247.70px;top:1159.02px;font-size:24px;line-height:24px;color:#0a0a0a;font-weight:400;white-space:nowrap;-webkit-text-stroke:0.4px #0a0a0a;">100</div>
<div style="position:absolute;left:2559.20px;top:1159.02px;font-size:24px;line-height:24px;color:#0a0a0a;font-weight:400;white-space:nowrap;-webkit-text-stroke:0.4px #0a0a0a;letter-spacing:0.3px;">Frontend Developer</div>
<svg style="position:absolute;left:2914.70px;top:1156.73px;" width="28" height="28" viewBox="0 0 24 24" fill="none" stroke="#0a0a0a" stroke-width="2" stroke-linecap="round" stroke-linejoin="round"><polygon points="5 4 15 12 5 20 5 4"/><line x1="19" x2="19" y1="5" y2="19"/></svg>
<div style="position:absolute;left:0.00px;top:1208.45px;width:3015.10px;height:75.43px;background:#efefef;"></div>
<svg style="position:absolute;left:29.20px;top:1232.66px;" width="27" height="27" viewBox="0 0 24 24" fill="none" stroke="#16a34a" stroke-width="1.7" stroke-linecap="round" stroke-linejoin="round"><circle cx="12" cy="12" r="10"/><path d="m9 12 2 2 4-4"/></svg>
<div style="position:absolute;left:113.70px;top:1236.45px;font-size:24px;line-height:24px;color:#0a0a0a;font-weight:400;white-space:nowrap;-webkit-text-stroke:0.4px #0a0a0a;">16</div>
<div style="position:absolute;left:199.20px;top:1234.45px;font-size:24px;line-height:24px;color:#0a0a0a;font-weight:400;white-space:nowrap;-webkit-text-stroke:0.4px #0a0a0a;letter-spacing:0.3px;">Michelle</div>
<div style="position:absolute;left:510.70px;top:1234.45px;font-size:24px;line-height:24px;color:#0a0a0a;font-weight:400;white-space:nowrap;-webkit-text-stroke:0.4px #0a0a0a;letter-spacing:0.3px;">Garcia</div>
<div style="position:absolute;left:822.20px;top:1234.45px;font-size:24px;line-height:24px;color:#0a0a0a;font-weight:400;white-space:nowrap;-webkit-text-stroke:0.4px #0a0a0a;letter-spacing:0.3px;">michelle.garcia@example.com</div>
<div style="position:absolute;left:1252.20px;top:1234.45px;font-size:24px;line-height:24px;color:#0a0a0a;font-weight:400;white-space:nowrap;-webkit-text-stroke:0.4px #0a0a0a;letter-spacing:0.3px;">permanent</div>
<div style="position:absolute;left:1594.70px;top:1234.45px;font-size:24px;line-height:24px;color:#0a0a0a;font-weight:400;white-space:nowrap;-webkit-text-stroke:0.4px #0a0a0a;">2024-04-10</div>
<div style="position:absolute;left:1904.70px;top:1234.45px;font-size:24px;line-height:24px;color:#0a0a0a;font-weight:400;white-space:nowrap;-webkit-text-stroke:0.4px #0a0a0a;letter-spacing:0.3px;">approver</div>
<div style="position:absolute;left:2247.70px;top:1234.45px;font-size:24px;line-height:24px;color:#0a0a0a;font-weight:400;white-space:nowrap;-webkit-text-stroke:0.4px #0a0a0a;">100</div>
<div style="position:absolute;left:2559.20px;top:1234.45px;font-size:24px;line-height:24px;color:#0a0a0a;font-weight:400;white-space:nowrap;-webkit-text-stroke:0.4px #0a0a0a;letter-spacing:0.3px;">Engineering Manager</div>
<svg style="position:absolute;left:2914.70px;top:1232.16px;" width="28" height="28" viewBox="0 0 24 24" fill="none" stroke="#0a0a0a" stroke-width="2" stroke-linecap="round" stroke-linejoin="round"><polygon points="5 4 15 12 5 20 5 4"/><line x1="19" x2="19" y1="5" y2="19"/></svg>
<div style="position:absolute;left:0.00px;top:1283.88px;width:3015.10px;height:75.43px;background:#ffffff;"></div>
<svg style="position:absolute;left:29.20px;top:1308.10px;" width="27" height="27" viewBox="0 0 24 24" fill="none" stroke="#16a34a" stroke-width="1.7" stroke-linecap="round" stroke-linejoin="round"><circle cx="12" cy="12" r="10"/><path d="m9 12 2 2 4-4"/></svg>
<div style="position:absolute;left:113.70px;top:1311.88px;font-size:24px;line-height:24px;color:#0a0a0a;font-weight:400;white-space:nowrap;-webkit-text-stroke:0.4px #0a0a0a;">17</div>
<div style="position:absolute;left:199.20px;top:1309.88px;font-size:24px;line-height:24px;color:#0a0a0a;font-weight:400;white-space:nowrap;-webkit-text-stroke:0.4px #0a0a0a;letter-spacing:0.3px;">Kevin</div>
<div style="position:absolute;left:510.70px;top:1309.88px;font-size:24px;line-height:24px;color:#0a0a0a;font-weight:400;white-space:nowrap;-webkit-text-stroke:0.4px #0a0a0a;letter-spacing:0.3px;">Martinez</div>
<div style="position:absolute;left:822.20px;top:1309.88px;font-size:24px;line-height:24px;color:#0a0a0a;font-weight:400;white-space:nowrap;-webkit-text-stroke:0.4px #0a0a0a;letter-spacing:0.3px;">kevin.martinez@example.com</div>
<div style="position:absolute;left:1252.20px;top:1309.88px;font-size:24px;line-height:24px;color:#0a0a0a;font-weight:400;white-space:nowrap;-webkit-text-stroke:0.4px #0a0a0a;letter-spacing:0.3px;">contractor</div>
<div style="position:absolute;left:1594.70px;top:1309.88px;font-size:24px;line-height:24px;color:#0a0a0a;font-weight:400;white-space:nowrap;-webkit-text-stroke:0.4px #0a0a0a;">2024-05-05</div>
<div style="position:absolute;left:1904.70px;top:1309.88px;font-size:24px;line-height:24px;color:#0a0a0a;font-weight:400;white-space:nowrap;-webkit-text-stroke:0.4px #0a0a0a;letter-spacing:0.3px;">default</div>
<div style="position:absolute;left:2247.70px;top:1309.88px;font-size:24px;line-height:24px;color:#0a0a0a;font-weight:400;white-space:nowrap;-webkit-text-stroke:0.4px #0a0a0a;">75</div>
<div style="position:absolute;left:2559.20px;top:1309.88px;font-size:24px;line-height:24px;color:#0a0a0a;font-weight:400;white-space:nowrap;-webkit-text-stroke:0.4px #0a0a0a;letter-spacing:0.3px;">Security Consultant</div>
<svg style="position:absolute;left:2914.70px;top:1307.60px;" width="28" height="28" viewBox="0 0 24 24" fill="none" stroke="#0a0a0a" stroke-width="2" stroke-linecap="round" stroke-linejoin="round"><polygon points="5 4 15 12 5 20 5 4"/><line x1="19" x2="19" y1="5" y2="19"/></svg>
</div>
<div style="position:absolute;left:768.00px;top:1830.30px;width:3072.00px;height:2.00px;background:#e8e8e8;"></div>
<div style="position:absolute;left:798.20px;top:1860.90px;width:145.70px;height:59.70px;border:2px solid #e6e6e6;border-radius:13px;box-shadow:0 1px 2px rgba(0,0,0,.05);background:#fff;"></div>
<div style="position:absolute;left:827.00px;top:1879.18px;font-size:24px;line-height:24px;color:#0a0a0a;font-weight:400;white-space:nowrap;-webkit-text-stroke:0.9px #0a0a0a;letter-spacing:-0.8px;">Go Back</div>
<div style="position:absolute;left:3506.70px;top:1860.00px;width:305.70px;height:61.30px;background:#222831;border-radius:13px;"></div>
<div style="position:absolute;left:3534.00px;top:1879.18px;font-size:24px;line-height:24px;color:#ffffff;font-weight:400;white-space:nowrap;-webkit-text-stroke:0.9px #ffffff;letter-spacing:0.85px;">Import Members</div>
<div style="position:absolute;left:3748.60px;top:1881.07px;font-size:20px;line-height:20px;color:#c8c8c8;font-weight:400;white-space:nowrap;">(19)</div>
<div style="position:absolute;left:1022.50px;top:389.50px;width:683.50px;height:587.50px;background:#fff;border:2px solid #e6e6e6;border-radius:16px;box-shadow:0 8px 12px -2px rgba(0,0,0,.10), 0 4px 8px -4px rgba(0,0,0,.10);"></div>
<div style="position:absolute;left:1039.00px;top:406.30px;width:650.70px;height:70.70px;border:3.5px solid #a1a1a1;border-radius:18px;"></div>
<div style="position:absolute;left:1044.00px;top:411.30px;width:640.70px;height:60.70px;border:2px solid #e3e3e3;border-radius:14px;background:#fff;"></div>
<div style="position:absolute;left:1066.00px;top:429.98px;font-size:24px;line-height:24px;color:#777777;font-weight:400;white-space:nowrap;letter-spacing:-0.15px;">Search policies...</div>
<div style="position:absolute;left:1024.50px;top:493.20px;width:679.50px;height:2.00px;background:#ebebeb;"></div>
<div style="position:absolute;left:1059.50px;top:535.00px;width:34.00px;height:34.00px;border:3px solid #d6d6d6;border-radius:10px;"></div>
<div style="position:absolute;left:1114.60px;top:536.88px;font-size:24px;line-height:24px;color:#0a0a0a;font-weight:700;white-space:nowrap;letter-spacing:0.36px;">Maternity Leave</div>
<div style="position:absolute;left:1114.60px;top:575.67px;font-size:20px;line-height:20px;color:#737373;font-weight:400;white-space:nowrap;letter-spacing:0px;">Annual leave</div>
<div style="position:absolute;left:1542.20px;top:531.10px;width:127.50px;height:34.80px;background:#dbeafe;border-radius:18px;"></div>
<div style="position:absolute;left:1605.95px;transform:translateX(-50%);top:537.62px;font-size:21px;line-height:21px;color:#1447e6;font-weight:400;white-space:nowrap;-webkit-text-stroke:0.3px #1447e6;letter-spacing:-0.35px;">20.00 days</div>
<div style="position:absolute;left:1059.50px;top:654.65px;width:34.00px;height:34.00px;border:3px solid #d6d6d6;border-radius:10px;"></div>
<div style="position:absolute;left:1114.60px;top:656.53px;font-size:24px;line-height:24px;color:#0a0a0a;font-weight:700;white-space:nowrap;letter-spacing:0.36px;">Maternity Leave</div>
<div style="position:absolute;left:1114.60px;top:695.32px;font-size:20px;line-height:20px;color:#737373;font-weight:400;white-space:nowrap;letter-spacing:0.45px;">Maternity Leave Policy</div>
<div style="position:absolute;left:1542.20px;top:650.75px;width:127.50px;height:34.80px;background:#dbeafe;border-radius:18px;"></div>
<div style="position:absolute;left:1605.95px;transform:translateX(-50%);top:657.27px;font-size:21px;line-height:21px;color:#1447e6;font-weight:400;white-space:nowrap;-webkit-text-stroke:0.3px #1447e6;letter-spacing:-0.35px;">10.00 days</div>
<div style="position:absolute;left:1059.50px;top:774.30px;width:34.00px;height:34.00px;border:3px solid #d6d6d6;border-radius:10px;"></div>
<div style="position:absolute;left:1114.60px;top:776.18px;font-size:24px;line-height:24px;color:#0a0a0a;font-weight:700;white-space:nowrap;letter-spacing:0.36px;">Paternity Leave</div>
<div style="position:absolute;left:1114.60px;top:814.97px;font-size:20px;line-height:20px;color:#737373;font-weight:400;white-space:nowrap;letter-spacing:0.45px;">Paternity Leave Policy</div>
<div style="position:absolute;left:1554.00px;top:770.40px;width:115.70px;height:34.80px;background:#dbeafe;border-radius:18px;"></div>
<div style="position:absolute;left:1611.85px;transform:translateX(-50%);top:776.92px;font-size:21px;line-height:21px;color:#1447e6;font-weight:400;white-space:nowrap;-webkit-text-stroke:0.3px #1447e6;letter-spacing:-0.35px;">7.00 days</div>
<div style="position:absolute;left:1059.50px;top:893.95px;width:34.00px;height:34.00px;border:3px solid #d6d6d6;border-radius:10px;"></div>
<div style="position:absolute;left:1114.60px;top:895.83px;font-size:24px;line-height:24px;color:#0a0a0a;font-weight:700;white-space:nowrap;letter-spacing:0.36px;">Remote Work</div>
<div style="position:absolute;left:1114.60px;top:934.62px;font-size:20px;line-height:20px;color:#737373;font-weight:400;white-space:nowrap;letter-spacing:0.45px;">Remote Work Policy</div>
<div style="position:absolute;left:1548.30px;top:890.05px;width:121.40px;height:34.80px;background:#dcfce7;border-radius:18px;"></div>
<div style="position:absolute;left:1609.00px;transform:translateX(-50%);top:896.57px;font-size:21px;line-height:21px;color:#008236;font-weight:400;white-space:nowrap;-webkit-text-stroke:0.3px #008236;letter-spacing:-0.35px;">Unlimited</div>
</body></html>
